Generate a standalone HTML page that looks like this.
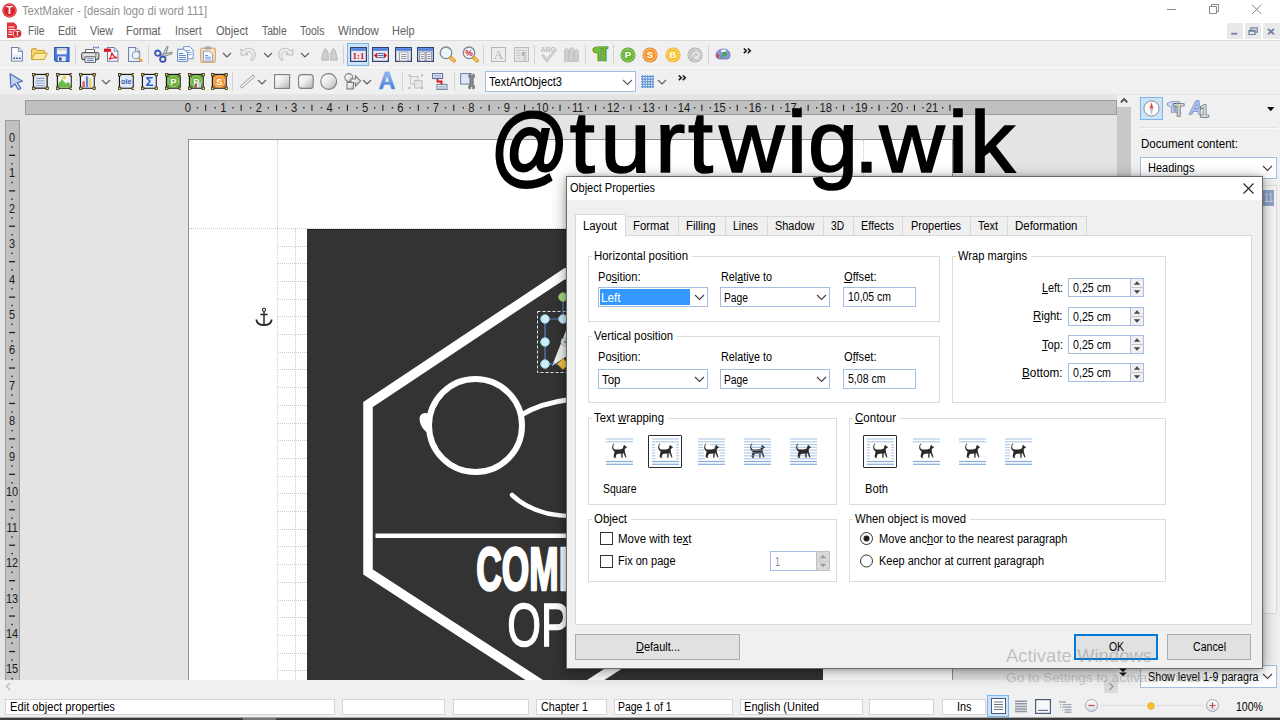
<!DOCTYPE html>
<html lang="en"><head><meta charset="utf-8"><title>TextMaker - Object Properties</title>
<style>
html,body{margin:0;padding:0}
body{width:1280px;height:720px;overflow:hidden;position:relative;background:#f0f0f0;font-family:"Liberation Sans",sans-serif;font-size:12px}
.r{position:absolute;box-sizing:border-box;display:block}
.t{position:absolute;white-space:nowrap;transform-origin:0 50%;display:block}
svg text{font-family:"Liberation Sans",sans-serif}
svg text.sf{font-family:"Liberation Serif",serif}
u{text-decoration:underline;text-underline-offset:1px}
</style></head>
<body>
<div class="r" style="left:0px;top:0px;width:1280px;height:40px;background:#fff;"></div>
<svg class="r" style="left:2px;top:3px" width="15" height="15" viewBox="0 0 15 15"><circle cx="7.5" cy="7.5" r="7.2" fill="#d9232e"/><circle cx="7.5" cy="7.5" r="6" fill="none" stroke="#ef6b6f" stroke-width="1"/><text x="7.500" y="11.400" text-anchor="middle" font-size="10.500" font-weight="bold" fill="#fff">T</text></svg>
<span class="t" style="left:22.0px;top:2.5px;height:16px;line-height:16px;font-size:12px;color:#909090;transform:scaleX(0.936);">TextMaker - [desain logo di word 111]</span>
<svg class="r" style="left:1160px;top:0" width="120" height="20" viewBox="0 0 120 20" fill="none" stroke="#8a8a8a" stroke-width="1"><path d="M7 9.500h9"/><path d="M49.500 6.500h7v7h-7z M51.500 6.500v-2h7v7h-2"/><path d="M92 4.800l9.400 9.200M101.400 4.800l-9.400 9.200"/></svg>
<svg class="r" style="left:5.500px;top:22px" width="17" height="17" viewBox="0 0 17 17"><path d="M1 0.5h7l3 3v12.5h-10z" fill="#e0323c"/><path d="M2.5 5h6M2.5 7.5h6M2.5 10h4M2.5 12.5h4" stroke="#fff" stroke-width="1.2"/><circle cx="11.5" cy="11.5" r="4.3" fill="#d9232e" stroke="#fff" stroke-width=".8"/><text x="11.500" y="13.900" text-anchor="middle" font-size="6.500" font-weight="bold" fill="#fff">T</text></svg>
<span class="t" style="left:27.8px;top:22.5px;height:16px;line-height:16px;font-size:12px;color:#616161;transform:scaleX(0.848);">File</span>
<span class="t" style="left:57.9px;top:22.5px;height:16px;line-height:16px;font-size:12px;color:#616161;transform:scaleX(0.885);">Edit</span>
<span class="t" style="left:90.1px;top:22.5px;height:16px;line-height:16px;font-size:12px;color:#616161;transform:scaleX(0.896);">View</span>
<span class="t" style="left:126.1px;top:22.5px;height:16px;line-height:16px;font-size:12px;color:#616161;transform:scaleX(0.910);">Format</span>
<span class="t" style="left:174.7px;top:22.5px;height:16px;line-height:16px;font-size:12px;color:#616161;transform:scaleX(0.886);">Insert</span>
<span class="t" style="left:215.6px;top:22.5px;height:16px;line-height:16px;font-size:12px;color:#616161;transform:scaleX(0.923);">Object</span>
<span class="t" style="left:262.0px;top:22.5px;height:16px;line-height:16px;font-size:12px;color:#616161;transform:scaleX(0.858);">Table</span>
<span class="t" style="left:300.4px;top:22.5px;height:16px;line-height:16px;font-size:12px;color:#616161;transform:scaleX(0.871);">Tools</span>
<span class="t" style="left:338.3px;top:22.5px;height:16px;line-height:16px;font-size:12px;color:#616161;transform:scaleX(0.958);">Window</span>
<span class="t" style="left:392.2px;top:22.5px;height:16px;line-height:16px;font-size:12px;color:#616161;transform:scaleX(0.912);">Help</span>
<div class="r" style="left:1227px;top:23px;width:16px;height:16px;background:#e9e9e9;"></div>
<div class="r" style="left:1245px;top:23px;width:16px;height:16px;background:#e9e9e9;"></div>
<div class="r" style="left:1262.5px;top:23px;width:17.5px;height:16px;background:#e9e9e9;"></div>
<svg class="r" style="left:1225px;top:22px" width="55" height="18" viewBox="0 0 55 18" fill="none" stroke="#6f819e" stroke-width="1.5"><path d="M6.200 11.700h6" stroke-width="1.800"/><path d="M24 8.300h6v4.200h-6z M26 8v-2.200h6.200v4.400h-2" stroke-width="1.200"/><path d="M24 9h6" stroke-width="1.600"/><path d="M43 6.800l6 5.600M49 6.800l-6 5.600" stroke-width="1.700"/></svg>
<div class="r" style="left:0px;top:40px;width:1280px;height:55px;background:#f0f0f0;"></div>
<div class="r" style="left:0px;top:40px;width:1280px;height:1px;background:#dcdcdc;"></div>
<div class="r" style="left:0px;top:67px;width:1280px;height:1px;background:#fafafa;"></div>
<div class="r" style="left:0px;top:94px;width:1280px;height:1px;background:#e6e6e6;"></div>
<div class="r" style="left:0px;top:95px;width:1131px;height:585px;background:#e4e4e4;"></div>
<div class="r" style="left:25px;top:100px;width:1092px;height:15px;background:#c0c0c0;border:1px solid #9b9b9b;"></div>
<div class="r" style="left:5px;top:120px;width:15px;height:565px;background:#c0c0c0;border:1px solid #9b9b9b;"></div>
<svg class="r" style="left:0;top:100px" width="1131" height="16" viewBox="0 0 1131 16"><text transform="translate(187.9 11.600) scale(.92 1)" x="0" y="0" text-anchor="middle" font-size="12.200" fill="#1c1c1c">0</text><text transform="translate(223.3 11.600) scale(.92 1)" x="0" y="0" text-anchor="middle" font-size="12.200" fill="#1c1c1c">1</text><text transform="translate(258.8 11.600) scale(.92 1)" x="0" y="0" text-anchor="middle" font-size="12.200" fill="#1c1c1c">2</text><text transform="translate(294.2 11.600) scale(.92 1)" x="0" y="0" text-anchor="middle" font-size="12.200" fill="#1c1c1c">3</text><text transform="translate(329.7 11.600) scale(.92 1)" x="0" y="0" text-anchor="middle" font-size="12.200" fill="#1c1c1c">4</text><text transform="translate(365.1 11.600) scale(.92 1)" x="0" y="0" text-anchor="middle" font-size="12.200" fill="#1c1c1c">5</text><text transform="translate(400.5 11.600) scale(.92 1)" x="0" y="0" text-anchor="middle" font-size="12.200" fill="#1c1c1c">6</text><text transform="translate(436.0 11.600) scale(.92 1)" x="0" y="0" text-anchor="middle" font-size="12.200" fill="#1c1c1c">7</text><text transform="translate(471.4 11.600) scale(.92 1)" x="0" y="0" text-anchor="middle" font-size="12.200" fill="#1c1c1c">8</text><text transform="translate(506.9 11.600) scale(.92 1)" x="0" y="0" text-anchor="middle" font-size="12.200" fill="#1c1c1c">9</text><text transform="translate(542.3 11.600) scale(.92 1)" x="0" y="0" text-anchor="middle" font-size="12.200" fill="#1c1c1c">10</text><text transform="translate(577.7 11.600) scale(.92 1)" x="0" y="0" text-anchor="middle" font-size="12.200" fill="#1c1c1c">11</text><text transform="translate(613.2 11.600) scale(.92 1)" x="0" y="0" text-anchor="middle" font-size="12.200" fill="#1c1c1c">12</text><text transform="translate(648.6 11.600) scale(.92 1)" x="0" y="0" text-anchor="middle" font-size="12.200" fill="#1c1c1c">13</text><text transform="translate(684.1 11.600) scale(.92 1)" x="0" y="0" text-anchor="middle" font-size="12.200" fill="#1c1c1c">14</text><text transform="translate(719.5 11.600) scale(.92 1)" x="0" y="0" text-anchor="middle" font-size="12.200" fill="#1c1c1c">15</text><text transform="translate(754.9 11.600) scale(.92 1)" x="0" y="0" text-anchor="middle" font-size="12.200" fill="#1c1c1c">16</text><text transform="translate(790.4 11.600) scale(.92 1)" x="0" y="0" text-anchor="middle" font-size="12.200" fill="#1c1c1c">17</text><text transform="translate(825.8 11.600) scale(.92 1)" x="0" y="0" text-anchor="middle" font-size="12.200" fill="#1c1c1c">18</text><text transform="translate(861.3 11.600) scale(.92 1)" x="0" y="0" text-anchor="middle" font-size="12.200" fill="#1c1c1c">19</text><text transform="translate(896.7 11.600) scale(.92 1)" x="0" y="0" text-anchor="middle" font-size="12.200" fill="#1c1c1c">20</text><text transform="translate(932.1 11.600) scale(.92 1)" x="0" y="0" text-anchor="middle" font-size="12.200" fill="#1c1c1c">21</text><rect x="196.8" y="7.100" width="1.400" height="1.400" fill="#222"/><rect x="205.1" y="4.700" width="1.100" height="6.200" fill="#222"/><rect x="214.5" y="7.100" width="1.400" height="1.400" fill="#222"/><rect x="232.2" y="7.100" width="1.400" height="1.400" fill="#222"/><rect x="240.6" y="4.700" width="1.100" height="6.200" fill="#222"/><rect x="249.9" y="7.100" width="1.400" height="1.400" fill="#222"/><rect x="267.6" y="7.100" width="1.400" height="1.400" fill="#222"/><rect x="276.0" y="4.700" width="1.100" height="6.200" fill="#222"/><rect x="285.4" y="7.100" width="1.400" height="1.400" fill="#222"/><rect x="303.1" y="7.100" width="1.400" height="1.400" fill="#222"/><rect x="311.4" y="4.700" width="1.100" height="6.200" fill="#222"/><rect x="320.8" y="7.100" width="1.400" height="1.400" fill="#222"/><rect x="338.5" y="7.100" width="1.400" height="1.400" fill="#222"/><rect x="346.9" y="4.700" width="1.100" height="6.200" fill="#222"/><rect x="356.2" y="7.100" width="1.400" height="1.400" fill="#222"/><rect x="374.0" y="7.100" width="1.400" height="1.400" fill="#222"/><rect x="382.3" y="4.700" width="1.100" height="6.200" fill="#222"/><rect x="391.7" y="7.100" width="1.400" height="1.400" fill="#222"/><rect x="409.4" y="7.100" width="1.400" height="1.400" fill="#222"/><rect x="417.8" y="4.700" width="1.100" height="6.200" fill="#222"/><rect x="427.1" y="7.100" width="1.400" height="1.400" fill="#222"/><rect x="444.8" y="7.100" width="1.400" height="1.400" fill="#222"/><rect x="453.2" y="4.700" width="1.100" height="6.200" fill="#222"/><rect x="462.6" y="7.100" width="1.400" height="1.400" fill="#222"/><rect x="480.3" y="7.100" width="1.400" height="1.400" fill="#222"/><rect x="488.6" y="4.700" width="1.100" height="6.200" fill="#222"/><rect x="498.0" y="7.100" width="1.400" height="1.400" fill="#222"/><rect x="515.7" y="7.100" width="1.400" height="1.400" fill="#222"/><rect x="524.1" y="4.700" width="1.100" height="6.200" fill="#222"/><rect x="532.4" y="7.100" width="1.400" height="1.400" fill="#222"/><rect x="552.2" y="7.100" width="1.400" height="1.400" fill="#222"/><rect x="559.5" y="4.700" width="1.100" height="6.200" fill="#222"/><rect x="567.9" y="7.100" width="1.400" height="1.400" fill="#222"/><rect x="587.6" y="7.100" width="1.400" height="1.400" fill="#222"/><rect x="595.0" y="4.700" width="1.100" height="6.200" fill="#222"/><rect x="603.3" y="7.100" width="1.400" height="1.400" fill="#222"/><rect x="623.0" y="7.100" width="1.400" height="1.400" fill="#222"/><rect x="630.4" y="4.700" width="1.100" height="6.200" fill="#222"/><rect x="638.8" y="7.100" width="1.400" height="1.400" fill="#222"/><rect x="658.5" y="7.100" width="1.400" height="1.400" fill="#222"/><rect x="665.8" y="4.700" width="1.100" height="6.200" fill="#222"/><rect x="674.2" y="7.100" width="1.400" height="1.400" fill="#222"/><rect x="693.9" y="7.100" width="1.400" height="1.400" fill="#222"/><rect x="701.3" y="4.700" width="1.100" height="6.200" fill="#222"/><rect x="709.6" y="7.100" width="1.400" height="1.400" fill="#222"/><rect x="729.4" y="7.100" width="1.400" height="1.400" fill="#222"/><rect x="736.7" y="4.700" width="1.100" height="6.200" fill="#222"/><rect x="745.1" y="7.100" width="1.400" height="1.400" fill="#222"/><rect x="764.8" y="7.100" width="1.400" height="1.400" fill="#222"/><rect x="772.2" y="4.700" width="1.100" height="6.200" fill="#222"/><rect x="780.5" y="7.100" width="1.400" height="1.400" fill="#222"/><rect x="800.2" y="7.100" width="1.400" height="1.400" fill="#222"/><rect x="807.6" y="4.700" width="1.100" height="6.200" fill="#222"/><rect x="816.0" y="7.100" width="1.400" height="1.400" fill="#222"/><rect x="835.7" y="7.100" width="1.400" height="1.400" fill="#222"/><rect x="843.0" y="4.700" width="1.100" height="6.200" fill="#222"/><rect x="851.4" y="7.100" width="1.400" height="1.400" fill="#222"/><rect x="871.1" y="7.100" width="1.400" height="1.400" fill="#222"/><rect x="878.5" y="4.700" width="1.100" height="6.200" fill="#222"/><rect x="886.8" y="7.100" width="1.400" height="1.400" fill="#222"/><rect x="906.6" y="7.100" width="1.400" height="1.400" fill="#222"/><rect x="913.9" y="4.700" width="1.100" height="6.200" fill="#222"/><rect x="922.3" y="7.100" width="1.400" height="1.400" fill="#222"/><rect x="942.0" y="7.100" width="1.400" height="1.400" fill="#222"/><rect x="949.4" y="4.700" width="1.100" height="6.200" fill="#222"/></svg>
<svg class="r" style="left:5px;top:120px" width="17" height="560" viewBox="0 0 17 560"><text transform="translate(7.100 21.8) scale(.9 1)" x="0" y="0" text-anchor="middle" font-size="12.200" fill="#1c1c1c">0</text><rect x="6.400" y="26.4" width="1.400" height="1.400" fill="#222"/><rect x="4.100" y="34.7" width="6" height="1.300" fill="#222"/><rect x="6.400" y="43.1" width="1.400" height="1.400" fill="#222"/><text transform="translate(7.100 57.2) scale(.9 1)" x="0" y="0" text-anchor="middle" font-size="12.200" fill="#1c1c1c">1</text><rect x="6.400" y="61.8" width="1.400" height="1.400" fill="#222"/><rect x="4.100" y="70.2" width="6" height="1.300" fill="#222"/><rect x="6.400" y="78.5" width="1.400" height="1.400" fill="#222"/><text transform="translate(7.100 92.7) scale(.9 1)" x="0" y="0" text-anchor="middle" font-size="12.200" fill="#1c1c1c">2</text><rect x="6.400" y="97.2" width="1.400" height="1.400" fill="#222"/><rect x="4.100" y="105.6" width="6" height="1.300" fill="#222"/><rect x="6.400" y="114.0" width="1.400" height="1.400" fill="#222"/><text transform="translate(7.100 128.1) scale(.9 1)" x="0" y="0" text-anchor="middle" font-size="12.200" fill="#1c1c1c">3</text><rect x="6.400" y="132.7" width="1.400" height="1.400" fill="#222"/><rect x="4.100" y="141.0" width="6" height="1.300" fill="#222"/><rect x="6.400" y="149.4" width="1.400" height="1.400" fill="#222"/><text transform="translate(7.100 163.6) scale(.9 1)" x="0" y="0" text-anchor="middle" font-size="12.200" fill="#1c1c1c">4</text><rect x="6.400" y="168.1" width="1.400" height="1.400" fill="#222"/><rect x="4.100" y="176.5" width="6" height="1.300" fill="#222"/><rect x="6.400" y="184.8" width="1.400" height="1.400" fill="#222"/><text transform="translate(7.100 199.0) scale(.9 1)" x="0" y="0" text-anchor="middle" font-size="12.200" fill="#1c1c1c">5</text><rect x="6.400" y="203.6" width="1.400" height="1.400" fill="#222"/><rect x="4.100" y="211.9" width="6" height="1.300" fill="#222"/><rect x="6.400" y="220.3" width="1.400" height="1.400" fill="#222"/><text transform="translate(7.100 234.4) scale(.9 1)" x="0" y="0" text-anchor="middle" font-size="12.200" fill="#1c1c1c">6</text><rect x="6.400" y="239.0" width="1.400" height="1.400" fill="#222"/><rect x="4.100" y="247.4" width="6" height="1.300" fill="#222"/><rect x="6.400" y="255.7" width="1.400" height="1.400" fill="#222"/><text transform="translate(7.100 269.9) scale(.9 1)" x="0" y="0" text-anchor="middle" font-size="12.200" fill="#1c1c1c">7</text><rect x="6.400" y="274.4" width="1.400" height="1.400" fill="#222"/><rect x="4.100" y="282.8" width="6" height="1.300" fill="#222"/><rect x="6.400" y="291.2" width="1.400" height="1.400" fill="#222"/><text transform="translate(7.100 305.3) scale(.9 1)" x="0" y="0" text-anchor="middle" font-size="12.200" fill="#1c1c1c">8</text><rect x="6.400" y="309.9" width="1.400" height="1.400" fill="#222"/><rect x="4.100" y="318.2" width="6" height="1.300" fill="#222"/><rect x="6.400" y="326.6" width="1.400" height="1.400" fill="#222"/><text transform="translate(7.100 340.8) scale(.9 1)" x="0" y="0" text-anchor="middle" font-size="12.200" fill="#1c1c1c">9</text><rect x="6.400" y="345.3" width="1.400" height="1.400" fill="#222"/><rect x="4.100" y="353.7" width="6" height="1.300" fill="#222"/><rect x="6.400" y="362.0" width="1.400" height="1.400" fill="#222"/><text transform="translate(7.100 376.2) scale(.9 1)" x="0" y="0" text-anchor="middle" font-size="12.200" fill="#1c1c1c">10</text><rect x="6.400" y="380.8" width="1.400" height="1.400" fill="#222"/><rect x="4.100" y="389.1" width="6" height="1.300" fill="#222"/><rect x="6.400" y="397.5" width="1.400" height="1.400" fill="#222"/><text transform="translate(7.100 411.6) scale(.9 1)" x="0" y="0" text-anchor="middle" font-size="12.200" fill="#1c1c1c">11</text><rect x="6.400" y="416.2" width="1.400" height="1.400" fill="#222"/><rect x="4.100" y="424.6" width="6" height="1.300" fill="#222"/><rect x="6.400" y="432.9" width="1.400" height="1.400" fill="#222"/><text transform="translate(7.100 447.1) scale(.9 1)" x="0" y="0" text-anchor="middle" font-size="12.200" fill="#1c1c1c">12</text><rect x="6.400" y="451.6" width="1.400" height="1.400" fill="#222"/><rect x="4.100" y="460.0" width="6" height="1.300" fill="#222"/><rect x="6.400" y="468.4" width="1.400" height="1.400" fill="#222"/><text transform="translate(7.100 482.5) scale(.9 1)" x="0" y="0" text-anchor="middle" font-size="12.200" fill="#1c1c1c">13</text><rect x="6.400" y="487.1" width="1.400" height="1.400" fill="#222"/><rect x="4.100" y="495.4" width="6" height="1.300" fill="#222"/><rect x="6.400" y="503.8" width="1.400" height="1.400" fill="#222"/><text transform="translate(7.100 518.0) scale(.9 1)" x="0" y="0" text-anchor="middle" font-size="12.200" fill="#1c1c1c">14</text><rect x="6.400" y="522.5" width="1.400" height="1.400" fill="#222"/><rect x="4.100" y="530.9" width="6" height="1.300" fill="#222"/><rect x="6.400" y="539.2" width="1.400" height="1.400" fill="#222"/><text transform="translate(7.100 553.4) scale(.9 1)" x="0" y="0" text-anchor="middle" font-size="12.200" fill="#1c1c1c">15</text><rect x="6.400" y="558.0" width="1.400" height="1.400" fill="#222"/><rect x="4.100" y="566.3" width="6" height="1.300" fill="#222"/><rect x="6.400" y="574.7" width="1.400" height="1.400" fill="#222"/></svg>
<div class="r" style="left:188px;top:139px;width:765px;height:541px;background:#fff;border-left:1px solid #8e8e8e;border-top:1px solid #8e8e8e;border-right:1px solid #8e8e8e;"></div>
<div class="r" style="left:277px;top:140px;width:0;height:540px;border-left:1px dotted #c9c9c9"></div>
<div class="r" style="left:190px;top:228px;width:632px;height:0;border-top:1px dotted #c9c9c9"></div>
<div class="r" style="left:295px;top:228px;width:0;height:452px;border-left:1px dotted #c9c9c9"></div>
<div class="r" style="left:278px;top:245.5px;width:29px;height:0;border-top:1px dotted #c9c9c9"></div>
<div class="r" style="left:278px;top:263.2px;width:29px;height:0;border-top:1px dotted #c9c9c9"></div>
<div class="r" style="left:278px;top:280.9px;width:29px;height:0;border-top:1px dotted #c9c9c9"></div>
<div class="r" style="left:278px;top:298.6px;width:29px;height:0;border-top:1px dotted #c9c9c9"></div>
<div class="r" style="left:278px;top:316.3px;width:29px;height:0;border-top:1px dotted #c9c9c9"></div>
<div class="r" style="left:278px;top:334.0px;width:29px;height:0;border-top:1px dotted #c9c9c9"></div>
<div class="r" style="left:278px;top:351.7px;width:29px;height:0;border-top:1px dotted #c9c9c9"></div>
<div class="r" style="left:278px;top:369.4px;width:29px;height:0;border-top:1px dotted #c9c9c9"></div>
<div class="r" style="left:278px;top:387.1px;width:29px;height:0;border-top:1px dotted #c9c9c9"></div>
<div class="r" style="left:278px;top:404.8px;width:29px;height:0;border-top:1px dotted #c9c9c9"></div>
<div class="r" style="left:278px;top:422.5px;width:29px;height:0;border-top:1px dotted #c9c9c9"></div>
<div class="r" style="left:278px;top:440.2px;width:29px;height:0;border-top:1px dotted #c9c9c9"></div>
<div class="r" style="left:278px;top:457.9px;width:29px;height:0;border-top:1px dotted #c9c9c9"></div>
<div class="r" style="left:278px;top:475.6px;width:29px;height:0;border-top:1px dotted #c9c9c9"></div>
<div class="r" style="left:278px;top:493.3px;width:29px;height:0;border-top:1px dotted #c9c9c9"></div>
<div class="r" style="left:278px;top:511.0px;width:29px;height:0;border-top:1px dotted #c9c9c9"></div>
<div class="r" style="left:278px;top:528.7px;width:29px;height:0;border-top:1px dotted #c9c9c9"></div>
<div class="r" style="left:278px;top:546.4px;width:29px;height:0;border-top:1px dotted #c9c9c9"></div>
<div class="r" style="left:278px;top:564.1px;width:29px;height:0;border-top:1px dotted #c9c9c9"></div>
<div class="r" style="left:278px;top:581.8px;width:29px;height:0;border-top:1px dotted #c9c9c9"></div>
<div class="r" style="left:278px;top:599.5px;width:29px;height:0;border-top:1px dotted #c9c9c9"></div>
<div class="r" style="left:278px;top:617.2px;width:29px;height:0;border-top:1px dotted #c9c9c9"></div>
<div class="r" style="left:278px;top:634.9px;width:29px;height:0;border-top:1px dotted #c9c9c9"></div>
<div class="r" style="left:278px;top:652.6px;width:29px;height:0;border-top:1px dotted #c9c9c9"></div>
<div class="r" style="left:278px;top:670.3px;width:29px;height:0;border-top:1px dotted #c9c9c9"></div>
<div class="r" style="left:863px;top:140px;width:0;height:40px;border-left:1px dotted #c9c9c9"></div>
<svg class="r" style="left:254px;top:306px" width="20" height="22" viewBox="0 0 20 22" fill="none" stroke="#2b2b2b" stroke-width="1.5"><circle cx="10" cy="3.8" r="1.6" stroke-width="1.1"/><path d="M10 5.5v13.5M6.3 8.6h7.4" /><path d="M2.2 13.5c0.6 3.6 3.6 5.6 7.8 5.6s7.2-2 7.8-5.6" stroke-width="1.7"/></svg>
<svg class="r" style="left:306.500px;top:229px" width="516" height="451" viewBox="307 229 516 451"><rect x="307" y="229" width="516" height="451" fill="#333"/><rect x="307" y="229" width="516" height="1" fill="#222"/><path d="M565 273.5L368 404.5V572L565 700L762 572V404.5Z" fill="none" stroke="#fff" stroke-width="9.5" stroke-linejoin="miter"/><circle cx="475.5" cy="425.5" r="46.5" fill="none" stroke="#fff" stroke-width="6"/><path d="M429 414c-6-3-11 1-9 8s7 12 10 10z" fill="#fff"/><path d="M519.5 416Q540 403 570 399.500" fill="none" stroke="#fff" stroke-width="5"/><path d="M512 495C528 510 548 516 572 516" fill="none" stroke="#fff" stroke-width="4.5" stroke-linecap="round"/><rect x="375.5" y="533.5" width="250" height="4.5" fill="#fff"/><text x="0" y="0" transform="translate(476.300 590.400) scale(0.57 1)" font-size="62" font-weight="bold" fill="#fff" stroke="#fff" stroke-width="2.500" stroke-linejoin="round">COMPANY</text><text x="0" y="0" transform="translate(507.200 645.600) scale(0.70 1)" font-size="62" fill="#fff" stroke="#fff" stroke-width="1.500">OPTIC</text><g><path d="M567 328L552 366L567 356Z" fill="#f2f2f2"/><rect x="537.5" y="311.5" width="40" height="61" fill="none" stroke="#dfe6f2" stroke-width="1" stroke-dasharray="3 2"/><path d="M545 319H567M545 319V364H567M563 297V319" stroke="#5b7fc4" stroke-width="1.2" fill="none"/><circle cx="545" cy="319" r="4.3" fill="#cdeef6" stroke="#8fd0e6" stroke-width="1"/><circle cx="563" cy="319" r="4.3" fill="#cdeef6" stroke="#8fd0e6" stroke-width="1"/><circle cx="545" cy="342" r="4.3" fill="#cdeef6" stroke="#8fd0e6" stroke-width="1"/><circle cx="545" cy="364" r="4.3" fill="#cdeef6" stroke="#8fd0e6" stroke-width="1"/><circle cx="563" cy="297" r="4.3" fill="#a6dc8c" stroke="#86c46e" stroke-width="1"/><path d="M563 358.5l5.5 5.5l-5.5 5.5l-5.5-5.5z" fill="#f5c84a" stroke="#e0a820" stroke-width=".8"/><circle cx="565" cy="342" r="4" fill="#e8e8e8" stroke="#bdbdbd"/><circle cx="565" cy="342" r="1.2" fill="#4caf50"/></g></svg>
<div class="r" style="left:1117px;top:95px;width:14px;height:585px;background:#f0f0f0;"></div>
<div class="r" style="left:1117px;top:107px;width:14px;height:560px;background:#c9c9c9;"></div>
<svg class="r" style="left:1117px;top:95px" width="14" height="12" viewBox="0 0 14 12"><path d="M3.900 7.300L7.100 4.100L10.300 7.300" fill="none" stroke="#4a4a4a" stroke-width="1.800"/></svg>
<div class="r" style="left:0px;top:680px;width:1131px;height:13px;background:#f0f0f0;"></div>
<svg class="r" style="left:2px;top:680px" width="12" height="13" viewBox="0 0 12 13"><path d="M8 3L4.5 6.5L8 10" fill="none" stroke="#bdbdbd" stroke-width="1.4"/></svg>
<div class="r" style="left:1104px;top:680px;width:14px;height:13px;background:#dadada;"></div>
<svg class="r" style="left:1104px;top:680px" width="14" height="13" viewBox="0 0 14 13"><path d="M5.5 3L9 6.5L5.5 10" fill="none" stroke="#9a9a9a" stroke-width="1.4"/></svg>
<div class="r" style="left:1131px;top:95px;width:149px;height:600px;background:#f0f0f0;"></div>
<div class="r" style="left:1140px;top:97px;width:23px;height:23px;background:#cce4f7;border:1px solid #7eb4ea;"></div>
<svg class="r" style="left:1143px;top:100px" width="17" height="17" viewBox="0 0 17 17"><circle cx="8.5" cy="8.5" r="7.6" fill="#fff" stroke="#8a8a8a" stroke-width="1"/><path d="M8.5 2.2L10.4 8.5H6.6Z" fill="#e8403c"/><path d="M8.5 14.8L10.4 8.5H6.6Z" fill="#b9bec6"/></svg>
<svg class="r" style="left:1164px;top:97px" width="24" height="23" viewBox="0 0 24 23"><text transform="translate(9.300 13.800) scale(1.8 1)" x="0" y="0" text-anchor="middle" font-size="13" font-weight="bold" fill="#c9d6f2" stroke="#5b74b4" stroke-width=".8" paint-order="stroke">¶</text><text transform="translate(14.600 19) scale(1.1 1)" x="0" y="0" text-anchor="middle" font-size="16" font-weight="bold" fill="#cfcfcf" stroke="#3a3a3a" stroke-width="1" paint-order="stroke">T</text></svg>
<svg class="r" style="left:1187px;top:96px" width="24" height="24" viewBox="0 0 24 24"><text transform="translate(2.500 17.500) scale(.93 1)" x="0" y="0" font-size="18.800" font-weight="bold" font-style="italic" fill="#a9bdea" stroke="#4f66a6" stroke-width=".8" paint-order="stroke">A</text><text x="12.600" y="21" font-size="17" font-weight="bold" fill="#d4d4d4" stroke="#3a3a3a" stroke-width="1" paint-order="stroke">1</text></svg>
<svg class="r" style="left:1267px;top:106.500px" width="8" height="5" viewBox="0 0 8 5"><path d="M0 0h7.500L3.750 4.200Z" fill="#111"/></svg>
<div class="r" style="left:1140px;top:127px;width:137px;height:1px;background:#e2e2e2;"></div>
<div class="r" style="left:1140px;top:128px;width:137px;height:1px;background:#fbfbfb;"></div>
<span class="t" style="left:1141.0px;top:136.0px;height:16px;line-height:16px;font-size:12px;color:#000;transform:scaleX(0.963);">Document content:</span>
<div class="r" style="left:1140px;top:157px;width:137px;height:22px;background:#fff;border:1px solid #a3bde3;"></div>
<span class="t" style="left:1147.5px;top:160.0px;height:16px;line-height:16px;font-size:12px;color:#000;transform:scaleX(0.917);">Headings</span>
<svg class="r" style="left:1262.0px;top:164.8px" width="11" height="7.5" viewBox="-1 -1 11 7.5"><path d="M0 0L4.5 4.5L9 0" fill="none" stroke="#444" stroke-width="1.2"/></svg>
<div class="r" style="left:1140px;top:185px;width:137px;height:429px;background:#f6f6f6;border:1px solid #dcdcdc;"></div>
<div class="r" style="left:1262px;top:190px;width:12px;height:16px;background:#8fa5cb;"></div>
<span class="t" style="left:1264.0px;top:190.0px;height:16px;line-height:16px;font-size:12px;color:#cfd9ee;transform:scaleX(0.723);">11</span>
<div class="r" style="left:1140px;top:665px;width:137px;height:23px;background:#fff;border:1px solid #a3bde3;"></div>
<span class="t" style="left:1147.5px;top:669.0px;height:16px;line-height:16px;font-size:12px;color:#000;transform:scaleX(0.895);">Show level 1-9 paragra</span>
<svg class="r" style="left:1262.0px;top:673.2px" width="11" height="7.5" viewBox="-1 -1 11 7.5"><path d="M0 0L4.5 4.5L9 0" fill="none" stroke="#444" stroke-width="1.2"/></svg>
<div class="r" style="left:0px;top:693px;width:1280px;height:24px;background:#f0f0f0;"></div>
<div class="r" style="left:5px;top:699px;width:330px;height:16px;background:#fff;border:1px solid #d4d4d4;"></div>
<div class="r" style="left:342px;top:699px;width:103px;height:16px;background:#fff;border:1px solid #d4d4d4;"></div>
<div class="r" style="left:453px;top:699px;width:76px;height:16px;background:#fff;border:1px solid #d4d4d4;"></div>
<div class="r" style="left:536px;top:699px;width:71px;height:16px;background:#fff;border:1px solid #d4d4d4;"></div>
<div class="r" style="left:614px;top:699px;width:119px;height:16px;background:#fff;border:1px solid #d4d4d4;"></div>
<div class="r" style="left:740px;top:699px;width:123px;height:16px;background:#fff;border:1px solid #d4d4d4;"></div>
<div class="r" style="left:869px;top:699px;width:65px;height:16px;background:#fff;border:1px solid #d4d4d4;"></div>
<div class="r" style="left:942px;top:699px;width:44px;height:16px;background:#fff;border:1px solid #d4d4d4;"></div>
<span class="t" style="left:9.5px;top:698.5px;height:16px;line-height:16px;font-size:12px;color:#000;transform:scaleX(0.931);">Edit object properties</span>
<span class="t" style="left:540.5px;top:698.5px;height:16px;line-height:16px;font-size:12px;color:#000;transform:scaleX(0.892);">Chapter 1</span>
<span class="t" style="left:618.0px;top:698.5px;height:16px;line-height:16px;font-size:12px;color:#000;transform:scaleX(0.872);">Page 1 of 1</span>
<span class="t" style="left:744.0px;top:698.5px;height:16px;line-height:16px;font-size:12px;color:#000;transform:scaleX(0.922);">English (United</span>
<span class="t" style="left:956.5px;top:698.5px;height:16px;line-height:16px;font-size:12px;color:#000;transform:scaleX(0.906);">Ins</span>
<div class="r" style="left:987px;top:695px;width:22px;height:22px;background:#cce4f7;border:1px solid #7eb4ea;"></div>
<svg class="r" style="left:991px;top:698px" width="15" height="16" viewBox="0 0 15 16"><rect x=".5" y=".5" width="14" height="15" fill="#fff" stroke="#4a5a78"/><path d="M3 4h9M3 6.5h9M3 9h9M3 11.500h9" stroke="#6b7280" stroke-width="1.1"/></svg>
<svg class="r" style="left:1014.500px;top:700px" width="12" height="13" viewBox="0 0 12 13"><path d="M0 1.200h12M0 3.800h12M0 6.400h12M0 9h12M0 11.600h12" stroke="#8c93a4" stroke-width="1.500"/></svg>
<svg class="r" style="left:1035px;top:699px" width="16" height="15" viewBox="0 0 16 15"><rect x=".6" y=".6" width="14.800" height="13.800" fill="#f7f8fa" stroke="#4a5a7a" stroke-width="1.200"/><path d="M3 11.400h10" stroke="#5a6a8a" stroke-width="1.100"/></svg>
<svg class="r" style="left:1059px;top:701px" width="13" height="12" viewBox="0 0 13 12"><path d="M0 1h7M3.500 3.600h9M3.500 6.200h9M5.500 8.800h7M5.500 11.300h7" stroke="#a4a9b4" stroke-width="1.400"/><path d="M1 3.600h1.200M1 6.200h1.200M3 8.800h1.200" stroke="#a4a9b4" stroke-width="1.200"/></svg>
<svg class="r" style="left:0;top:0" width="0" height="0"><defs><linearGradient id="gzb" x1="0" y1="0" x2="0" y2="1"><stop offset="0" stop-color="#ffffff"/><stop offset="1" stop-color="#d4dbe8"/></linearGradient></defs></svg>
<div class="r" style="left:1101px;top:705px;width:102px;height:1px;background:#dedede;"></div>
<svg class="r" style="left:1084.5px;top:698.5px" width="13" height="13" viewBox="0 0 13 13"><circle cx="6.500" cy="6.500" r="6" fill="url(#gzb)" stroke="#a0a6b4" stroke-width="1"/><path d="M3.500 6.500h6" stroke="#c8463f" stroke-width="1.200"/></svg>
<svg class="r" style="left:1206.0px;top:698.5px" width="13" height="13" viewBox="0 0 13 13"><circle cx="6.500" cy="6.500" r="6" fill="url(#gzb)" stroke="#a0a6b4" stroke-width="1"/><path d="M3.500 6.500h6M6.500 3.500v6" stroke="#c8463f" stroke-width="1.200"/></svg>
<svg class="r" style="left:1147px;top:701.500px" width="8" height="8" viewBox="0 0 8 8"><circle cx="4" cy="4" r="3.300" fill="#f6c12d" stroke="#e2a91c" stroke-width=".7"/></svg>
<span class="t" style="left:1235.5px;top:698.5px;height:16px;line-height:16px;font-size:12px;color:#000;transform:scaleX(0.880);">100%</span>
<div class="r" style="left:0px;top:717px;width:1280px;height:1px;background:#a8a8a8;"></div>
<div class="r" style="left:0px;top:718px;width:1280px;height:2px;background:#3c3c3c;"></div>
<div class="r" style="left:243px;top:718px;width:33px;height:2px;background:#777;"></div>
<svg class="r" style="left:11.2px;top:47.2px" width="12" height="14.6" viewBox="0 0 13 16" preserveAspectRatio="none"><path d="M.6 .6h7.400l4.400 4.400v10.400H.6z" fill="#fdfdff" stroke="#6d80a8" stroke-width="1.100"/><path d="M8 .6v4.400h4.400" fill="#dfe6f3" stroke="#6d80a8" stroke-width=".9"/><path d="M1.200 8h10.600v6.800H1.200z" fill="#dce5f5" opacity=".6"/><path d="M2.600 12.300h1.800M5.600 12.300h1.800M8.600 12.300h1.800" stroke="#3c4f86" stroke-width="1.700"/></svg>
<svg class="r" style="left:31px;top:48.4px" width="17" height="12.3" viewBox="0 0 18 13" preserveAspectRatio="none"><path d="M.6 11.800V1.800q0-1 1-1h4l1.400 1.800h6.600q1 0 1 1v2" fill="#f5d877" stroke="#c79a1e" stroke-width="1"/><path d="M.8 12.200L4 5.500h13.200L13.800 12.200z" fill="#fbe9a4" stroke="#c79a1e" stroke-width="1"/></svg>
<svg class="r" style="left:54px;top:47px" width="15.6" height="15" viewBox="0 0 16 16" preserveAspectRatio="none"><path d="M.6 .6h14.800v14.800H2.200L.6 13.800z" fill="#4b7be0" stroke="#2f55b0" stroke-width="1.100"/><rect x="3" y="1.200" width="10" height="6.600" fill="#f4f4f6"/><rect x="3" y="1.200" width="10" height="2.400" fill="#c8ccd6"/><rect x="4" y="10" width="8" height="5.200" fill="#e9ecf4"/><rect x="5.200" y="11" width="2.600" height="3.600" fill="#3a4f86"/></svg>
<div class="r" style="left:75px;top:45px;width:1px;height:19px;background:#d2d2d2;"></div>
<svg class="r" style="left:81px;top:46px" width="19" height="17" viewBox="0 0 19 17"><path d="M12 1.500h1.400M14.300 1.500h1.400M16.600 1.500h1.400" stroke="#3f5fae" stroke-width="1.300"/><path d="M4.500 7V3.500h9V7" fill="#fff" stroke="#6e6e6e" stroke-width="1"/><rect x=".6" y="6.600" width="17.300" height="7" rx="2" fill="#c9c9c9" stroke="#5c5c5c" stroke-width="1.100"/><rect x="1.600" y="7.600" width="15.300" height="2" fill="#e9e9e9"/><circle cx="14.800" cy="8.600" r="1" fill="#3fae49"/><path d="M4 10.800h10.500v5.600H4z" fill="#fff" stroke="#5c5c5c" stroke-width="1"/><path d="M5.800 12.800h7M5.800 14.600h7" stroke="#5a78c0" stroke-width="1"/></svg>
<svg class="r" style="left:104px;top:47px" width="14.5" height="14.8" viewBox="0 0 15 16" preserveAspectRatio="none"><path d="M3.600 .6h6.800l4 4v10.800H3.600z" fill="#fdfdff" stroke="#6d80a8" stroke-width="1.100"/><path d="M10.400 .6v4h4" fill="#dfe6f3" stroke="#6d80a8" stroke-width=".9"/><rect x="0" y="1.800" width="7.400" height="3.400" fill="#e0131f"/><path d="M5.200 13.200c2-2.200 3-5 2.800-7.200c1 3.200 3 5.200 5.600 5.800c-3-.2-6 .2-8.400 1.400z" fill="none" stroke="#e2202c" stroke-width="1.300"/></svg>
<svg class="r" style="left:128px;top:47px" width="15" height="15" viewBox="0 0 16 16" preserveAspectRatio="none"><path d="M.6 .6h7.400l4.400 4.400v10.400H.6z" fill="#eef1f8" stroke="#6d80a8" stroke-width="1.100"/><path d="M8 .6v4.400h4.400" fill="#dfe6f3" stroke="#6d80a8" stroke-width=".9"/><circle cx="8.600" cy="8.800" r="4" fill="#e9f3fb" stroke="#8e9bb0" stroke-width="1.200"/><path d="M11.600 11.800l3.200 3" stroke="#e9a33a" stroke-width="2.200" stroke-linecap="round"/></svg>
<div class="r" style="left:148px;top:45px;width:1px;height:19px;background:#d2d2d2;"></div>
<svg class="r" style="left:154px;top:45px" width="19" height="18" viewBox="0 0 19 18"><path d="M8 11L13.200 1.200l1 .2L11 12z" fill="#d9d9d9" stroke="#777" stroke-width=".8"/><path d="M6.500 9.500L18 7.200l.2 1.600L8 12z" fill="#cfcfcf" stroke="#777" stroke-width=".8"/><circle cx="3.800" cy="8.200" r="2.700" fill="none" stroke="#3a55b4" stroke-width="1.800"/><circle cx="8.800" cy="14.200" r="2.700" fill="none" stroke="#3a55b4" stroke-width="1.800"/></svg>
<svg class="r" style="left:177px;top:46px" width="17" height="16" viewBox="0 0 17 16"><path d="M6.600 .6h6l3.600 3.600v8.600H6.600z" fill="#f4f8ff" stroke="#7b93c4" stroke-width="1"/><path d="M8 4.500h5M8 6.500h6.500M8 8.500h6.500" stroke="#7fa3dc" stroke-width=".9"/><path d="M.6 3.200h6.400l3.600 3.600v8.600H.6z" fill="#f4f8ff" stroke="#6d86bd" stroke-width="1"/><path d="M2 7.500h4M2 9.500h7M2 11.500h7M2 13.500h7" stroke="#5e8ad4" stroke-width="1"/></svg>
<svg class="r" style="left:200px;top:46px" width="16" height="17" viewBox="0 0 16 17"><rect x=".7" y="2.200" width="14.600" height="14.200" rx="1.600" fill="#fbe0c0" stroke="#e0a66a" stroke-width="1.200"/><path d="M5 2.800q0-2.200 3-2.200t3 2.200z" fill="#c9c9c9" stroke="#8a8a8a" stroke-width=".8"/><path d="M3.400 5.200h6.200l3 3v7H3.400z" fill="#fafcff" stroke="#7b93c4" stroke-width=".9"/><path d="M5 9.500h3M5 11.300h6M5 13.100h6" stroke="#5e8ad4" stroke-width=".9"/></svg>
<svg class="r" style="left:222.0px;top:51.5px" width="10" height="7.0" viewBox="-1 -1 10 7.0"><path d="M0 0L4.0 4.0L8 0" fill="none" stroke="#5e5e5e" stroke-width="1.2"/></svg>
<svg class="r" style="left:240px;top:47px" width="17" height="15" viewBox="0 0 17 15"><path d="M.8 2.200l2.600 1.600c2-2.600 6-3.400 9.400-1.400c3.600 2.400 3 7.600-.4 11.200l-1.600-.8c2-2.800 2.200-5.800-.2-7.400c-1.800-1-3.600-.6-4.800.6l2.400 1.600l-7 .6z" fill="#ececec" stroke="#b4b4b4" stroke-width=".9" stroke-linejoin="round"/></svg>
<svg class="r" style="left:263.0px;top:51.5px" width="10" height="7.0" viewBox="-1 -1 10 7.0"><path d="M0 0L4.0 4.0L8 0" fill="none" stroke="#5e5e5e" stroke-width="1.2"/></svg>
<svg class="r" style="left:277px;top:47px" width="17" height="15" viewBox="0 0 17 15"><g transform="translate(17 0) scale(-1 1)"><path d="M.8 2.200l2.600 1.600c2-2.600 6-3.400 9.400-1.400c3.600 2.400 3 7.600-.4 11.200l-1.600-.8c2-2.800 2.200-5.800-.2-7.400c-1.800-1-3.600-.6-4.800.6l2.400 1.600l-7 .6z" fill="#ececec" stroke="#b4b4b4" stroke-width=".9" stroke-linejoin="round"/></g></svg>
<svg class="r" style="left:300.0px;top:51.5px" width="10" height="7.0" viewBox="-1 -1 10 7.0"><path d="M0 0L4.0 4.0L8 0" fill="none" stroke="#5e5e5e" stroke-width="1.2"/></svg>
<svg class="r" style="left:321px;top:48px" width="17" height="13" viewBox="0 0 17 13"><path d="M2.800 2.200h3.200l.6 1.600l1 6.800v1.600H.8V10z M11 2.200h3.200L16.200 10v2.200H9.400v-1.600l1-6.800z" fill="#cdcdcd" stroke="#b5b5b5" stroke-width=".8"/><rect x="3.200" y=".4" width="2.400" height="2" fill="#c4c4c4"/><rect x="11.400" y=".4" width="2.400" height="2" fill="#c4c4c4"/><rect x="7" y="4.500" width="3" height="3.500" fill="#d6d6d6"/></svg>
<div class="r" style="left:343px;top:45px;width:1px;height:19px;background:#d2d2d2;"></div>
<div class="r" style="left:347px;top:43px;width:22px;height:23px;background:#cce4f7;border:1px solid #7eb4ea;"></div>
<svg class="r" style="left:349.5px;top:47px" width="17" height="15" viewBox="0 0 17 15"><rect x=".6" y=".6" width="15.800" height="13.800" fill="#e9ebf0" stroke="#2f416e" stroke-width="1.200"/><rect x="1.200" y="1.200" width="14.600" height="2.600" fill="#4f7fe0"/><text x="8.500" y="12" text-anchor="middle" font-size="9" font-weight="bold" fill="#d0101c" class="sf">1:1</text></svg>
<svg class="r" style="left:372px;top:47px" width="17" height="15" viewBox="0 0 17 15"><rect x=".6" y=".6" width="15.800" height="13.800" fill="#e9ebf0" stroke="#2f416e" stroke-width="1.200"/><rect x="1.200" y="1.200" width="14.600" height="2.600" fill="#4f7fe0"/><path d="M5.500 6.500h6M5.500 8.500h6M5.500 10.500h6" stroke="#4f6fc0" stroke-width="1"/><path d="M1.800 8.500l3.400-3v6zM15.200 8.500l-3.400-3v6z" fill="#d8141f"/></svg>
<svg class="r" style="left:394.5px;top:47px" width="17" height="15" viewBox="0 0 17 15"><rect x=".6" y=".6" width="15.800" height="13.800" fill="#e9ebf0" stroke="#2f416e" stroke-width="1.200"/><rect x="1.200" y="1.200" width="14.600" height="2.600" fill="#4f7fe0"/><rect x="4.500" y="5" width="8.500" height="9" fill="#f4f4f6" stroke="#8a8f9c" stroke-width=".8"/><path d="M6 7.500h5.500M6 9.500h5.500M6 11.500h5.500" stroke="#8a8f9c" stroke-width=".9"/></svg>
<svg class="r" style="left:417px;top:47px" width="17" height="15" viewBox="0 0 17 15"><rect x=".6" y=".6" width="15.800" height="13.800" fill="#e9ebf0" stroke="#2f416e" stroke-width="1.200"/><rect x="1.200" y="1.200" width="14.600" height="2.600" fill="#4f7fe0"/><rect x="2.500" y="5" width="5.500" height="9" fill="#f4f4f6" stroke="#7c8292" stroke-width=".8"/><rect x="9.200" y="5" width="5.500" height="9" fill="#f4f4f6" stroke="#7c8292" stroke-width=".8"/><path d="M3.800 7.500h3M3.800 9.500h3M3.800 11.500h3M10.500 7.500h3M10.500 9.500h3M10.500 11.500h3" stroke="#7c8292" stroke-width=".9"/></svg>
<svg class="r" style="left:439px;top:46px" width="18" height="17" viewBox="0 0 18 17"><circle cx="7" cy="6.800" r="5.800" fill="#eaf4fb" stroke="#7f8790" stroke-width="1.300"/><path d="M3.500 5.500a4 4 0 0 1 4-2.500" stroke="#fff" stroke-width="1.200" fill="none"/><path d="M12 11.800l3 2.800" stroke="#dd9622" stroke-width="3.800" stroke-linecap="round"/><path d="M12 11.800l3 2.800" stroke="#f8cf72" stroke-width="1.600" stroke-linecap="round"/></svg>
<svg class="r" style="left:462px;top:46px" width="18" height="17" viewBox="0 0 18 17"><circle cx="7" cy="6.800" r="5.800" fill="#eaf4fb" stroke="#7f8790" stroke-width="1.300"/><path d="M3.500 5.500a4 4 0 0 1 4-2.500" stroke="#fff" stroke-width="1.200" fill="none"/><path d="M12 11.800l3 2.800" stroke="#dd9622" stroke-width="3.800" stroke-linecap="round"/><path d="M12 11.800l3 2.800" stroke="#f8cf72" stroke-width="1.600" stroke-linecap="round"/><text x="7" y="10" text-anchor="middle" font-size="8.500" font-weight="bold" fill="#d8141f">%</text></svg>
<div class="r" style="left:483px;top:45px;width:1px;height:19px;background:#d2d2d2;"></div>
<svg class="r" style="left:491px;top:47px" width="15" height="15" viewBox="0 0 15 15"><rect x=".5" y=".5" width="14" height="14" fill="#ececec" stroke="#b6b6b6"/><text x="7.500" y="12.300" text-anchor="middle" font-size="13" fill="#b4b4b4" class="sf">A</text></svg>
<svg class="r" style="left:513.5px;top:47px" width="15" height="15" viewBox="0 0 15 15"><rect x=".5" y=".5" width="14" height="14" fill="#e6e6e6" stroke="#bcbcbc"/><path d="M2.500 3.500h10M2.500 6h4M2.500 8.500h4M2.500 11h4" stroke="#c4c4c4" stroke-width="1"/><text x="10.300" y="12.600" text-anchor="middle" font-size="10" fill="#a8a8a8">¶</text></svg>
<div class="r" style="left:534px;top:45px;width:1px;height:19px;background:#d2d2d2;"></div>
<svg class="r" style="left:540px;top:45px" width="18" height="18" viewBox="0 0 18 18"><text x="8" y="6.800" text-anchor="middle" font-size="7" font-weight="bold" fill="#bdbdbd">ABC</text><path d="M1.500 10.500l2-1.200l3.200 4.200L15.500 3.500l1.400 1L7 17.200z" fill="#d2d2d2" stroke="#bdbdbd" stroke-width=".7"/></svg>
<svg class="r" style="left:564px;top:47px" width="15" height="15" viewBox="0 0 15 15"><path d="M.5 14.500V3l2-1.800l2 1.800v11.500z M5.200 14.500V2l2.300-1.500L9.800 2v12.500z M10.500 14.500V4l2-1.800l2 1.800v10.500z" fill="#cfcfcf" stroke="#bcbcbc" stroke-width=".8"/></svg>
<div class="r" style="left:585px;top:45px;width:1px;height:19px;background:#d2d2d2;"></div>
<svg class="r" style="left:591px;top:45px" width="18" height="19" viewBox="0 0 18 19"><text transform="translate(9.300 13.500) scale(1.49 .86)" x="0" y="0" text-anchor="middle" font-size="19" font-weight="bold" fill="#74c038" stroke="#3b7d12" stroke-width="1.200" paint-order="stroke">¶</text></svg>
<div class="r" style="left:613px;top:45px;width:1px;height:19px;background:#d2d2d2;"></div>
<svg class="r" style="left:619.8px;top:46.8px" width="16" height="16" viewBox="0 0 16 16"><circle cx="8" cy="8" r="7.500" fill="#4f9424"/><circle cx="8" cy="8" r="6.200" fill="#69b534" stroke="#b9e08e" stroke-width=".9"/><text x="8" y="11.300" text-anchor="middle" font-size="9.500" font-weight="bold" fill="#fff">P</text></svg>
<svg class="r" style="left:642.3px;top:46.8px" width="16" height="16" viewBox="0 0 16 16"><circle cx="8" cy="8" r="7.500" fill="#e6761a"/><circle cx="8" cy="8" r="6.200" fill="#f6962a" stroke="#fbd09a" stroke-width=".9"/><text x="8" y="11.300" text-anchor="middle" font-size="9.500" font-weight="bold" fill="#fff">S</text></svg>
<svg class="r" style="left:664.8px;top:46.8px" width="16" height="16" viewBox="0 0 16 16"><circle cx="8" cy="8" r="7.500" fill="#f0a818"/><circle cx="8" cy="8" r="6.200" fill="#fbc02c" stroke="#fde6a0" stroke-width=".9"/><text x="8" y="11.300" text-anchor="middle" font-size="9.500" font-weight="bold" fill="#fff">B</text></svg>
<svg class="r" style="left:687px;top:46.8px" width="16" height="16" viewBox="0 0 16 16"><circle cx="8" cy="8" r="7.500" fill="#a8a8a8"/><circle cx="8" cy="8" r="6.200" fill="#c6c6c6" stroke="#e2e2e2" stroke-width=".9"/></svg>
<svg class="r" style="left:688.5px;top:48px" width="13" height="13" viewBox="0 0 13 13"><path d="M3.500 8.500c0-3 2-4.500 4-4.200c2 .3 3 2 2 3.500c-1.200 1.200-3 .5-3.600 1.800c.8 1.200 2.800 1 4 .2" fill="none" stroke="#e9e9e9" stroke-width="1.500"/></svg>
<div class="r" style="left:708px;top:45px;width:1px;height:19px;background:#d2d2d2;"></div>
<svg class="r" style="left:715px;top:48px" width="16" height="13" viewBox="0 0 16 13"><path d="M1 7.500c0-4 3-6.500 7.500-6.500s6.500 3 6.500 6.500c0 2.500-1.500 3.500-3.500 3.500h-6c-3 0-4.500-1-4.500-3.500z" fill="#8d96d2" stroke="#6a72b0" stroke-width=".8"/><path d="M1.500 5.500l3 1.500l-1 3.500l-2.300-2z" fill="#d04a58"/><path d="M6.500 1.500h4l.5 2.500h-5z" fill="#f0f2fa"/><path d="M6 9.500l4.500-4.500M7.800 4.800h3v3" stroke="#2ea84a" stroke-width="1.500" fill="none"/></svg>
<svg class="r" style="left:743px;top:47.5px" width="9" height="6" viewBox="0 0 9 6"><path d="M.8 .5L3.300 2.800L.8 5.100M4.800 .5L7.300 2.800L4.800 5.100" fill="none" stroke="#111" stroke-width="1.500"/></svg>
<svg class="r" style="left:9px;top:73px" width="15" height="17" viewBox="0 0 15 17"><path d="M1 .8l12.500 7.400l-5.200 1.400l3.600 5.600l-2.600 1.500l-3.400-5.800L2 14.500z" fill="#c3d4f3" stroke="#4a6ab2" stroke-width="1.100" stroke-linejoin="round"/></svg>
<svg class="r" style="left:32.2px;top:73.2px" width="16.6" height="16.6" viewBox="0 0 17 17" preserveAspectRatio="none"><rect x="1.500" y="1.500" width="14" height="14" fill="#eef2fa" stroke="#1a1a1a" stroke-width="1.300"/><rect x="2.600" y="2.600" width="11.800" height="11.800" fill="#e4eaf6"/><path d="M4 5.500h9M4 8h9M4 10.500h9M4 13h9" stroke="#9aa8c6" stroke-width="1.200"/><rect x="0.4" y="0.4" width="2.600" height="2.600" fill="#f8d648" stroke="#1a1a1a" stroke-width=".7"/><rect x="14.4" y="0.4" width="2.600" height="2.600" fill="#f8d648" stroke="#1a1a1a" stroke-width=".7"/><rect x="0.4" y="14.4" width="2.600" height="2.600" fill="#f8d648" stroke="#1a1a1a" stroke-width=".7"/><rect x="14.4" y="14.4" width="2.600" height="2.600" fill="#f8d648" stroke="#1a1a1a" stroke-width=".7"/></svg>
<svg class="r" style="left:55.7px;top:73.2px" width="16.6" height="16.6" viewBox="0 0 17 17" preserveAspectRatio="none"><rect x="1.500" y="1.500" width="14" height="14" fill="#eef2fa" stroke="#1a1a1a" stroke-width="1.300"/><rect x="2.200" y="2.200" width="12.600" height="12.600" fill="#f4f8fb"/><circle cx="8.500" cy="4.600" r="2" fill="#f6cf4c"/><path d="M2.200 14.800V11l4-4.500l4 4.500l2-2l2.600 2.800v3z" fill="#6dbb45"/><path d="M2.200 11l4-4.500l4 4.500" fill="none" stroke="#a8dc84" stroke-width=".8"/><rect x="0.4" y="0.4" width="2.600" height="2.600" fill="#f8d648" stroke="#1a1a1a" stroke-width=".7"/><rect x="14.4" y="0.4" width="2.600" height="2.600" fill="#f8d648" stroke="#1a1a1a" stroke-width=".7"/><rect x="0.4" y="14.4" width="2.600" height="2.600" fill="#f8d648" stroke="#1a1a1a" stroke-width=".7"/><rect x="14.4" y="14.4" width="2.600" height="2.600" fill="#f8d648" stroke="#1a1a1a" stroke-width=".7"/></svg>
<svg class="r" style="left:79.2px;top:73.2px" width="16.6" height="16.6" viewBox="0 0 17 17" preserveAspectRatio="none"><rect x="1.500" y="1.500" width="14" height="14" fill="#eef2fa" stroke="#1a1a1a" stroke-width="1.300"/><rect x="2.200" y="2.200" width="12.600" height="12.600" fill="#f0f2f8"/><rect x="3.500" y="8.500" width="2.400" height="6" fill="#d85a62"/><rect x="7" y="3.500" width="2.400" height="11" fill="#5f86d6"/><rect x="10.500" y="5.500" width="2.400" height="9" fill="#f1cf62"/><rect x="0.4" y="0.4" width="2.600" height="2.600" fill="#f8d648" stroke="#1a1a1a" stroke-width=".7"/><rect x="14.4" y="0.4" width="2.600" height="2.600" fill="#f8d648" stroke="#1a1a1a" stroke-width=".7"/><rect x="0.4" y="14.4" width="2.600" height="2.600" fill="#f8d648" stroke="#1a1a1a" stroke-width=".7"/><rect x="14.4" y="14.4" width="2.600" height="2.600" fill="#f8d648" stroke="#1a1a1a" stroke-width=".7"/></svg>
<svg class="r" style="left:101.0px;top:78.5px" width="10" height="7.0" viewBox="-1 -1 10 7.0"><path d="M0 0L4.0 4.0L8 0" fill="none" stroke="#5e5e5e" stroke-width="1.2"/></svg>
<svg class="r" style="left:117.7px;top:73.2px" width="16.6" height="16.6" viewBox="0 0 17 17" preserveAspectRatio="none"><rect x="1.500" y="1.500" width="14" height="14" fill="#eef2fa" stroke="#1a1a1a" stroke-width="1.300"/><rect x="2.200" y="2.200" width="12.600" height="12.600" fill="#dfe8fa"/><text x="8.500" y="11.500" text-anchor="middle" font-size="7.600" font-weight="bold" fill="#3c5cae">ole</text><rect x="0.4" y="0.4" width="2.600" height="2.600" fill="#f8d648" stroke="#1a1a1a" stroke-width=".7"/><rect x="14.4" y="0.4" width="2.600" height="2.600" fill="#f8d648" stroke="#1a1a1a" stroke-width=".7"/><rect x="0.4" y="14.4" width="2.600" height="2.600" fill="#f8d648" stroke="#1a1a1a" stroke-width=".7"/><rect x="14.4" y="14.4" width="2.600" height="2.600" fill="#f8d648" stroke="#1a1a1a" stroke-width=".7"/></svg>
<svg class="r" style="left:141.2px;top:73.2px" width="16.6" height="16.6" viewBox="0 0 17 17" preserveAspectRatio="none"><rect x="1.500" y="1.500" width="14" height="14" fill="#eef2fa" stroke="#1a1a1a" stroke-width="1.300"/><rect x="2.200" y="2.200" width="12.600" height="12.600" fill="#e6ecf8"/><text x="8.600" y="13.200" text-anchor="middle" font-size="13.500" font-weight="bold" fill="#2f5fc8">Σ</text><rect x="0.4" y="0.4" width="2.600" height="2.600" fill="#f8d648" stroke="#1a1a1a" stroke-width=".7"/><rect x="14.4" y="0.4" width="2.600" height="2.600" fill="#f8d648" stroke="#1a1a1a" stroke-width=".7"/><rect x="0.4" y="14.4" width="2.600" height="2.600" fill="#f8d648" stroke="#1a1a1a" stroke-width=".7"/><rect x="14.4" y="14.4" width="2.600" height="2.600" fill="#f8d648" stroke="#1a1a1a" stroke-width=".7"/></svg>
<svg class="r" style="left:164.6px;top:73.2px" width="16.6" height="16.6" viewBox="0 0 17 17" preserveAspectRatio="none"><rect x="1.500" y="1.500" width="14" height="14" fill="#eef2fa" stroke="#1a1a1a" stroke-width="1.300"/><rect x="2.200" y="2.200" width="12.600" height="12.600" fill="#5a9e2c"/><circle cx="8.500" cy="8.500" r="5.600" fill="#6bb336" stroke="#b5dc8c" stroke-width=".8"/><text x="8.500" y="12" text-anchor="middle" font-size="9.500" font-weight="bold" fill="#fff">P</text><rect x="0.4" y="0.4" width="2.600" height="2.600" fill="#f8d648" stroke="#1a1a1a" stroke-width=".7"/><rect x="14.4" y="0.4" width="2.600" height="2.600" fill="#f8d648" stroke="#1a1a1a" stroke-width=".7"/><rect x="0.4" y="14.4" width="2.600" height="2.600" fill="#f8d648" stroke="#1a1a1a" stroke-width=".7"/><rect x="14.4" y="14.4" width="2.600" height="2.600" fill="#f8d648" stroke="#1a1a1a" stroke-width=".7"/></svg>
<svg class="r" style="left:188.0px;top:73.2px" width="16.6" height="16.6" viewBox="0 0 17 17" preserveAspectRatio="none"><rect x="1.500" y="1.500" width="14" height="14" fill="#eef2fa" stroke="#1a1a1a" stroke-width="1.300"/><rect x="2.200" y="2.200" width="12.600" height="12.600" fill="#5a9e2c"/><circle cx="8.500" cy="8.500" r="5.600" fill="#6bb336" stroke="#b5dc8c" stroke-width=".8"/><text x="8.500" y="12" text-anchor="middle" font-size="9.500" font-weight="bold" fill="#fff">P</text><rect x="7" y="11" width="1.800" height="3.800" fill="#d83a4a"/><rect x="9.200" y="10" width="1.800" height="4.800" fill="#e8ecf6"/><rect x="11.400" y="9.500" width="1.800" height="5.300" fill="#bcd0f0"/><rect x="0.4" y="0.4" width="2.600" height="2.600" fill="#f8d648" stroke="#1a1a1a" stroke-width=".7"/><rect x="14.4" y="0.4" width="2.600" height="2.600" fill="#f8d648" stroke="#1a1a1a" stroke-width=".7"/><rect x="0.4" y="14.4" width="2.600" height="2.600" fill="#f8d648" stroke="#1a1a1a" stroke-width=".7"/><rect x="14.4" y="14.4" width="2.600" height="2.600" fill="#f8d648" stroke="#1a1a1a" stroke-width=".7"/></svg>
<svg class="r" style="left:211.39999999999998px;top:73.2px" width="16.6" height="16.6" viewBox="0 0 17 17" preserveAspectRatio="none"><rect x="1.500" y="1.500" width="14" height="14" fill="#eef2fa" stroke="#1a1a1a" stroke-width="1.300"/><rect x="2.200" y="2.200" width="12.600" height="12.600" fill="#ec8218"/><circle cx="8.500" cy="8.500" r="5.600" fill="#f6962a" stroke="#fbd09a" stroke-width=".8"/><text x="8.500" y="12" text-anchor="middle" font-size="9.500" font-weight="bold" fill="#fff">S</text><rect x="0.4" y="0.4" width="2.600" height="2.600" fill="#f8d648" stroke="#1a1a1a" stroke-width=".7"/><rect x="14.4" y="0.4" width="2.600" height="2.600" fill="#f8d648" stroke="#1a1a1a" stroke-width=".7"/><rect x="0.4" y="14.4" width="2.600" height="2.600" fill="#f8d648" stroke="#1a1a1a" stroke-width=".7"/><rect x="14.4" y="14.4" width="2.600" height="2.600" fill="#f8d648" stroke="#1a1a1a" stroke-width=".7"/></svg>
<div class="r" style="left:232px;top:72px;width:1px;height:19px;background:#d2d2d2;"></div>
<svg class="r" style="left:239px;top:74px" width="17" height="15" viewBox="0 0 17 15"><path d="M1.200 12.400L14 1l1.600 1.700L2.800 14.200z" fill="#f6f6f6" stroke="#8c8c8c" stroke-width=".9"/></svg>
<svg class="r" style="left:256.5px;top:79.0px" width="10" height="7.0" viewBox="-1 -1 10 7.0"><path d="M0 0L4.0 4.0L8 0" fill="none" stroke="#5e5e5e" stroke-width="1.2"/></svg>
<svg class="r" style="left:0;top:0" width="0" height="0"><defs><linearGradient id="gsh" x1="0" y1="0" x2="1" y2="1"><stop offset="0" stop-color="#fff"/><stop offset=".45" stop-color="#ededed"/><stop offset="1" stop-color="#b2b2b2"/></linearGradient><linearGradient id="gta" x1="0" y1="0" x2="0" y2="1"><stop offset="0" stop-color="#a8ccfa"/><stop offset="1" stop-color="#356ad0"/></linearGradient></defs></svg>
<svg class="r" style="left:274px;top:74px" width="17" height="15" viewBox="0 0 17 15"><rect x=".6" y=".6" width="15" height="13.800" fill="url(#gsh)" stroke="#7e7e7e" stroke-width="1.100"/></svg>
<svg class="r" style="left:297.5px;top:74px" width="17" height="15" viewBox="0 0 17 15"><rect x=".6" y=".6" width="14.600" height="13.800" rx="3" fill="url(#gsh)" stroke="#7e7e7e" stroke-width="1.100"/></svg>
<svg class="r" style="left:320px;top:73px" width="18" height="17" viewBox="0 0 18 17"><circle cx="8.700" cy="8.500" r="7.900" fill="url(#gsh)" stroke="#7e7e7e" stroke-width="1.100"/></svg>
<svg class="r" style="left:344px;top:73px" width="18" height="17" viewBox="0 0 18 17"><circle cx="4.800" cy="4.600" r="4" fill="url(#gsh)" stroke="#7e7e7e" stroke-width="1.100"/><path d="M7 6h4.500V2.800L16.600 8l-5.100 5.200V10H7z" fill="url(#gsh)" stroke="#7e7e7e" stroke-width="1.100"/><rect x="3" y="9.500" width="6.500" height="6.500" fill="url(#gsh)" stroke="#7e7e7e" stroke-width="1.100"/></svg>
<svg class="r" style="left:362.0px;top:79.0px" width="10" height="7.0" viewBox="-1 -1 10 7.0"><path d="M0 0L4.0 4.0L8 0" fill="none" stroke="#5e5e5e" stroke-width="1.2"/></svg>
<svg class="r" style="left:377px;top:70px" width="20" height="21" viewBox="0 0 20 21"><text transform="translate(10 18.600) scale(1.02 1)" x="0" y="0" text-anchor="middle" font-size="23" font-weight="bold" fill="url(#gta)" stroke="#6f9be6" stroke-width=".5">A</text></svg>
<div class="r" style="left:402px;top:72px;width:1px;height:19px;background:#d2d2d2;"></div>
<svg class="r" style="left:408px;top:73.5px" width="16" height="16" viewBox="0 0 16 16"><rect x="2.500" y="2.500" width="7.500" height="7.500" fill="#ededed" stroke="#c2c2c2"/><rect x="6.500" y="6.500" width="7.500" height="7.500" fill="#e6e6e6" stroke="#c2c2c2"/><path d="M.5 .5h2v2h-2zM13 .5h2v2h-2zM.5 13h2v2h-2zM13 13h2v2h-2z" fill="#b4b4b4"/></svg>
<svg class="r" style="left:432px;top:73px" width="16" height="17" viewBox="0 0 16 17"><rect x=".6" y=".6" width="10" height="5" fill="#eef1f8" stroke="#55679a" stroke-width="1"/><path d="M2 2.500h7M2 4.200h7" stroke="#8a9ac4" stroke-width=".8"/><rect x="5" y="11.400" width="10" height="5" fill="#eef1f8" stroke="#6a7a9a" stroke-width="1"/><path d="M6.500 13.300h7M6.500 15h7" stroke="#8a9ac4" stroke-width=".8"/><path d="M5.500 6v2.500h4v2.800" fill="none" stroke="#d8141f" stroke-width="1.800"/></svg>
<div class="r" style="left:454px;top:72px;width:1px;height:19px;background:#d2d2d2;"></div>
<svg class="r" style="left:460px;top:73px" width="17" height="17" viewBox="0 0 17 17"><rect x=".6" y=".6" width="10.500" height="10.500" fill="#dfe5f5" stroke="#6d80a8" stroke-width="1"/><path d="M9.200 1.200c-1 1.800-.6 3.400.8 4.200v6.200c-1.400.8-1.800 2.400-.8 4.200h1.200v-2.500h2.400v2.500h1.200c1-1.800.6-3.400-.8-4.200V5.400c1.400-.8 1.800-2.400.8-4.200h-1.200v2.500h-2.400V1.200z" fill="#8a8a8a" stroke="#5a5a5a" stroke-width=".7"/></svg>
<div class="r" style="left:485px;top:71px;width:151px;height:21px;background:#fff;border:1px solid #a3bde3;"></div>
<span class="t" style="left:489.0px;top:74.0px;height:16px;line-height:16px;font-size:12px;color:#000;transform:scaleX(0.928);">TextArtObject3</span>
<svg class="r" style="left:622.3px;top:78.8px" width="11" height="7.5" viewBox="-1 -1 11 7.5"><path d="M0 0L4.5 4.5L9 0" fill="none" stroke="#5e5e5e" stroke-width="1.2"/></svg>
<svg class="r" style="left:641px;top:75px" width="13" height="13" viewBox="0 0 13 13"><path d="M1.5 0v13M0 1.5h13" stroke="#5d92d6" stroke-width="1.100"/><path d="M4.1 0v13M0 4.1h13" stroke="#5d92d6" stroke-width="1.100"/><path d="M6.7 0v13M0 6.7h13" stroke="#5d92d6" stroke-width="1.100"/><path d="M9.3 0v13M0 9.3h13" stroke="#5d92d6" stroke-width="1.100"/><path d="M11.9 0v13M0 11.9h13" stroke="#5d92d6" stroke-width="1.100"/></svg>
<svg class="r" style="left:656.5px;top:79.0px" width="10" height="7.0" viewBox="-1 -1 10 7.0"><path d="M0 0L4.0 4.0L8 0" fill="none" stroke="#5e5e5e" stroke-width="1.2"/></svg>
<svg class="r" style="left:678px;top:75px" width="9" height="6" viewBox="0 0 9 6"><path d="M.8 .5L3.300 2.800L.8 5.100M4.800 .5L7.300 2.800L4.800 5.100" fill="none" stroke="#111" stroke-width="1.500"/></svg>
<div class="r" style="left:566px;top:176px;width:697px;height:493px;background:#f0f0f0;border:1px solid #6a6a6a;box-shadow:0 3px 14px rgba(0,0,0,.38),0 0 4px rgba(0,0,0,.2);"></div>
<div class="r" style="left:567px;top:177px;width:695px;height:23px;background:#fff;"></div>
<span class="t" style="left:569.6px;top:180.0px;height:16px;line-height:16px;font-size:12px;color:#000;transform:scaleX(0.917);">Object Properties</span>
<svg class="r" style="left:1242px;top:182px" width="13" height="13" viewBox="0 0 13 13"><path d="M1.5 1.5l10 10M11.5 1.5l-10 10" stroke="#222" stroke-width="1.1" fill="none"/></svg>
<div class="r" style="left:575px;top:235px;width:677px;height:390px;background:#fff;border:1px solid #d9d9d9;"></div>
<div class="r" style="left:575px;top:214px;width:51px;height:23px;background:#fff;border:1px solid #d9d9d9;border-bottom:none;"></div>
<span class="t" style="left:583.0px;top:217.5px;height:16px;line-height:16px;font-size:12px;color:#000;transform:scaleX(0.944);">Layout</span>
<div class="r" style="left:627px;top:216px;width:52px;height:20px;background:#f0f0f0;border:1px solid #d9d9d9;border-left:none;"></div>
<span class="t" style="left:633.0px;top:217.5px;height:16px;line-height:16px;font-size:12px;color:#000;transform:scaleX(0.947);">Format</span>
<div class="r" style="left:679px;top:216px;width:47px;height:20px;background:#f0f0f0;border:1px solid #d9d9d9;border-left:none;"></div>
<span class="t" style="left:686.0px;top:217.5px;height:16px;line-height:16px;font-size:12px;color:#000;transform:scaleX(0.941);">Filling</span>
<div class="r" style="left:726px;top:216px;width:42px;height:20px;background:#f0f0f0;border:1px solid #d9d9d9;border-left:none;"></div>
<span class="t" style="left:733.0px;top:217.5px;height:16px;line-height:16px;font-size:12px;color:#000;transform:scaleX(0.872);">Lines</span>
<div class="r" style="left:768px;top:216px;width:56px;height:20px;background:#f0f0f0;border:1px solid #d9d9d9;border-left:none;"></div>
<span class="t" style="left:775.0px;top:217.5px;height:16px;line-height:16px;font-size:12px;color:#000;transform:scaleX(0.911);">Shadow</span>
<div class="r" style="left:824px;top:216px;width:30px;height:20px;background:#f0f0f0;border:1px solid #d9d9d9;border-left:none;"></div>
<span class="t" style="left:831.0px;top:217.5px;height:16px;line-height:16px;font-size:12px;color:#000;transform:scaleX(0.848);">3D</span>
<div class="r" style="left:854px;top:216px;width:49px;height:20px;background:#f0f0f0;border:1px solid #d9d9d9;border-left:none;"></div>
<span class="t" style="left:861.0px;top:217.5px;height:16px;line-height:16px;font-size:12px;color:#000;transform:scaleX(0.905);">Effects</span>
<div class="r" style="left:903px;top:216px;width:68px;height:20px;background:#f0f0f0;border:1px solid #d9d9d9;border-left:none;"></div>
<span class="t" style="left:911.0px;top:217.5px;height:16px;line-height:16px;font-size:12px;color:#000;transform:scaleX(0.914);">Properties</span>
<div class="r" style="left:971px;top:216px;width:37px;height:20px;background:#f0f0f0;border:1px solid #d9d9d9;border-left:none;"></div>
<span class="t" style="left:977.5px;top:217.5px;height:16px;line-height:16px;font-size:12px;color:#000;transform:scaleX(0.909);">Text</span>
<div class="r" style="left:1008px;top:216px;width:79px;height:20px;background:#f0f0f0;border:1px solid #d9d9d9;border-left:none;"></div>
<span class="t" style="left:1015.0px;top:217.5px;height:16px;line-height:16px;font-size:12px;color:#000;transform:scaleX(0.956);">Deformation</span>
<div class="r" style="left:588px;top:256px;width:352px;height:66px;border:1px solid #dcdcdc;"></div><div class="r" style="left:592px;top:254px;width:100px;height:5px;background:#fff;"></div><span class="t" style="left:593.9px;top:248.3px;height:16px;line-height:16px;font-size:12px;color:#000;transform:scaleX(0.952);">Horizontal position</span>
<div class="r" style="left:588px;top:336px;width:352px;height:67px;border:1px solid #dcdcdc;"></div><div class="r" style="left:592px;top:334px;width:85px;height:5px;background:#fff;"></div><span class="t" style="left:593.9px;top:328.3px;height:16px;line-height:16px;font-size:12px;color:#000;transform:scaleX(0.940);">Vertical position</span>
<div class="r" style="left:952px;top:256px;width:214px;height:147px;border:1px solid #dcdcdc;"></div><div class="r" style="left:956px;top:254px;width:75px;height:5px;background:#fff;"></div><span class="t" style="left:957.9px;top:248.3px;height:16px;line-height:16px;font-size:12px;color:#000;transform:scaleX(0.927);">Wrap margins</span>
<div class="r" style="left:588px;top:418px;width:249px;height:87px;border:1px solid #dcdcdc;"></div><div class="r" style="left:592px;top:416px;width:76px;height:5px;background:#fff;"></div><span class="t" style="left:593.9px;top:410.3px;height:16px;line-height:16px;font-size:12px;color:#000;transform:scaleX(0.945);">Text <u>w</u>rapping</span>
<div class="r" style="left:849px;top:418px;width:317px;height:87px;border:1px solid #dcdcdc;"></div><div class="r" style="left:853px;top:416px;width:47px;height:5px;background:#fff;"></div><span class="t" style="left:854.9px;top:410.3px;height:16px;line-height:16px;font-size:12px;color:#000;transform:scaleX(0.960);"><u>C</u>ontour</span>
<div class="r" style="left:588px;top:519px;width:249px;height:63px;border:1px solid #dcdcdc;"></div><div class="r" style="left:592px;top:517px;width:39px;height:5px;background:#fff;"></div><span class="t" style="left:593.9px;top:511.3px;height:16px;line-height:16px;font-size:12px;color:#000;transform:scaleX(0.952);">Object</span>
<div class="r" style="left:849px;top:519px;width:317px;height:63px;border:1px solid #dcdcdc;"></div><div class="r" style="left:853px;top:517px;width:117px;height:5px;background:#fff;"></div><span class="t" style="left:854.9px;top:511.3px;height:16px;line-height:16px;font-size:12px;color:#000;transform:scaleX(0.940);">When object is moved</span>
<span class="t" style="left:598.0px;top:268.5px;height:16px;line-height:16px;font-size:12px;color:#000;transform:scaleX(0.923);">Po<u>s</u>ition:</span>
<span class="t" style="left:721.0px;top:268.5px;height:16px;line-height:16px;font-size:12px;color:#000;transform:scaleX(0.900);">Rel<u>a</u>tive to</span>
<span class="t" style="left:843.5px;top:268.5px;height:16px;line-height:16px;font-size:12px;color:#000;transform:scaleX(0.925);"><u>O</u>ffset:</span>
<div class="r" style="left:598px;top:287px;width:110px;height:20px;background:#fff;border:1px solid #a3bde3;"></div><div class="r" style="left:599.5px;top:289px;width:90px;height:16px;background:#3399ff;"></div><span class="t" style="left:601.0px;top:289.5px;height:16px;line-height:16px;font-size:12px;color:#fff;transform:scaleX(0.974);">Left</span><svg class="r" style="left:693.9px;top:293.8px" width="11" height="7.5" viewBox="-1 -1 11 7.5"><path d="M0 0L4.5 4.5L9 0" fill="none" stroke="#444" stroke-width="1.2"/></svg>
<div class="r" style="left:720px;top:287px;width:110px;height:20px;background:#fff;border:1px solid #a3bde3;"></div><span class="t" style="left:723.5px;top:289.5px;height:16px;line-height:16px;font-size:12px;color:#000;transform:scaleX(0.856);">Page</span><svg class="r" style="left:815.9px;top:293.8px" width="11" height="7.5" viewBox="-1 -1 11 7.5"><path d="M0 0L4.5 4.5L9 0" fill="none" stroke="#444" stroke-width="1.2"/></svg>
<div class="r" style="left:843px;top:287px;width:73px;height:20px;background:#fff;border:1px solid #a3bde3;"></div>
<span class="t" style="left:847.5px;top:289.0px;height:16px;line-height:16px;font-size:12px;color:#000;transform:scaleX(0.871);">10,05 cm</span>
<span class="t" style="left:598.0px;top:349.0px;height:16px;line-height:16px;font-size:12px;color:#000;transform:scaleX(0.923);">Pos<u>i</u>tion:</span>
<span class="t" style="left:721.0px;top:349.0px;height:16px;line-height:16px;font-size:12px;color:#000;transform:scaleX(0.900);">Relati<u>v</u>e to</span>
<span class="t" style="left:843.5px;top:349.0px;height:16px;line-height:16px;font-size:12px;color:#000;transform:scaleX(0.925);">O<u>f</u>fset:</span>
<div class="r" style="left:598px;top:369px;width:110px;height:20px;background:#fff;border:1px solid #a3bde3;"></div><span class="t" style="left:601.5px;top:371.5px;height:16px;line-height:16px;font-size:12px;color:#000;transform:scaleX(0.956);">Top</span><svg class="r" style="left:693.9px;top:375.8px" width="11" height="7.5" viewBox="-1 -1 11 7.5"><path d="M0 0L4.5 4.5L9 0" fill="none" stroke="#444" stroke-width="1.2"/></svg>
<div class="r" style="left:720px;top:369px;width:110px;height:20px;background:#fff;border:1px solid #a3bde3;"></div><span class="t" style="left:723.5px;top:371.5px;height:16px;line-height:16px;font-size:12px;color:#000;transform:scaleX(0.856);">Page</span><svg class="r" style="left:815.9px;top:375.8px" width="11" height="7.5" viewBox="-1 -1 11 7.5"><path d="M0 0L4.5 4.5L9 0" fill="none" stroke="#444" stroke-width="1.2"/></svg>
<div class="r" style="left:843px;top:369px;width:73px;height:20px;background:#fff;border:1px solid #a3bde3;"></div>
<span class="t" style="left:847.5px;top:371.0px;height:16px;line-height:16px;font-size:12px;color:#000;transform:scaleX(0.879);">5,08 cm</span>
<span class="t" style="left:1041.5px;top:280.3px;height:16px;line-height:16px;font-size:12px;color:#000;transform:scaleX(0.899);"><u>L</u>eft:</span>
<div class="r" style="left:1068px;top:278px;width:76px;height:19px;background:#fff;border:1px solid #a3bde3;"></div><div class="r" style="left:1130px;top:278px;width:14px;height:19px;background:#f0f0f0;border:1px solid #a3bde3;"></div><div class="r" style="left:1130px;top:287.0px;width:14px;height:1px;background:#c8c8c8;"></div><svg class="r" style="left:1133px;top:278px" width="8" height="19" viewBox="0 0 8 19"><path d="M0.8 6.7L4 3.2L7.2 6.7Z M0.8 12.3L4 15.8L7.2 12.3Z" fill="#444"/></svg><span class="t" style="left:1072.5px;top:280.0px;height:16px;line-height:16px;font-size:12px;color:#000;transform:scaleX(0.890);">0,25 cm</span>
<span class="t" style="left:1033.0px;top:308.4px;height:16px;line-height:16px;font-size:12px;color:#000;transform:scaleX(0.941);"><u>R</u>ight:</span>
<div class="r" style="left:1068px;top:307px;width:76px;height:19px;background:#fff;border:1px solid #a3bde3;"></div><div class="r" style="left:1130px;top:307px;width:14px;height:19px;background:#f0f0f0;border:1px solid #a3bde3;"></div><div class="r" style="left:1130px;top:316.0px;width:14px;height:1px;background:#c8c8c8;"></div><svg class="r" style="left:1133px;top:307px" width="8" height="19" viewBox="0 0 8 19"><path d="M0.8 6.7L4 3.2L7.2 6.7Z M0.8 12.3L4 15.8L7.2 12.3Z" fill="#444"/></svg><span class="t" style="left:1072.5px;top:309.0px;height:16px;line-height:16px;font-size:12px;color:#000;transform:scaleX(0.890);">0,25 cm</span>
<span class="t" style="left:1041.5px;top:336.6px;height:16px;line-height:16px;font-size:12px;color:#000;transform:scaleX(0.926);"><u>T</u>op:</span>
<div class="r" style="left:1068px;top:335px;width:76px;height:19px;background:#fff;border:1px solid #a3bde3;"></div><div class="r" style="left:1130px;top:335px;width:14px;height:19px;background:#f0f0f0;border:1px solid #a3bde3;"></div><div class="r" style="left:1130px;top:344.0px;width:14px;height:1px;background:#c8c8c8;"></div><svg class="r" style="left:1133px;top:335px" width="8" height="19" viewBox="0 0 8 19"><path d="M0.8 6.7L4 3.2L7.2 6.7Z M0.8 12.3L4 15.8L7.2 12.3Z" fill="#444"/></svg><span class="t" style="left:1072.5px;top:337.0px;height:16px;line-height:16px;font-size:12px;color:#000;transform:scaleX(0.890);">0,25 cm</span>
<span class="t" style="left:1022.0px;top:364.8px;height:16px;line-height:16px;font-size:12px;color:#000;transform:scaleX(0.979);"><u>B</u>ottom:</span>
<div class="r" style="left:1068px;top:363px;width:76px;height:19px;background:#fff;border:1px solid #a3bde3;"></div><div class="r" style="left:1130px;top:363px;width:14px;height:19px;background:#f0f0f0;border:1px solid #a3bde3;"></div><div class="r" style="left:1130px;top:372.0px;width:14px;height:1px;background:#c8c8c8;"></div><svg class="r" style="left:1133px;top:363px" width="8" height="19" viewBox="0 0 8 19"><path d="M0.8 6.7L4 3.2L7.2 6.7Z M0.8 12.3L4 15.8L7.2 12.3Z" fill="#444"/></svg><span class="t" style="left:1072.5px;top:365.0px;height:16px;line-height:16px;font-size:12px;color:#000;transform:scaleX(0.890);">0,25 cm</span>
<div class="r" style="left:648px;top:435px;width:34px;height:33px;background:#fff;border:1.5px solid #2b2b2b;border-radius:1px;"></div>
<svg class="r" style="left:606px;top:438px" width="27" height="28" viewBox="0 0 27 28"><rect x="0" y="0.4" width="27" height="1.2" fill="#b5cde8"/><rect x="0" y="3.2" width="27" height="1.2" fill="#b5cde8"/><rect x="0" y="22.9" width="27" height="1.2" fill="#86add9"/><rect x="0" y="25.7" width="27" height="1.2" fill="#86add9"/><path d="M7.8 5.5C6.2 6.8 5.7 9.4 6.7 11.6C7.2 12.6 7.9 13 8.5 13.3L8.3 15L7.5 18.4L8.5 19.8L10.3 20L9.6 18.6L10.9 15.9L15.2 15.5L15.3 19.8L16.5 19.8L16.7 15.6L17.5 15.1L19.3 19.2L20.5 19.4L18.9 14L18.7 11L20.9 9.6L20.4 8.6L19.3 8.2L18.7 6.9L17.6 7.6L16.8 10.6L14 11.4L9.4 11.6C8.2 11.4 7.4 10.4 7.2 9C7 7.6 7.6 6.5 8.5 5.9Z" fill="#2a2a2a"/></svg>
<svg class="r" style="left:652px;top:438px" width="27" height="28" viewBox="0 0 27 28"><rect x="0" y="0.4" width="27" height="1.2" fill="#b5cde8"/><rect x="0" y="3.2" width="27" height="1.2" fill="#b5cde8"/><rect x="0" y="22.9" width="27" height="1.2" fill="#86add9"/><rect x="0" y="25.7" width="27" height="1.2" fill="#86add9"/><rect x="0" y="6.0" width="3" height="1.2" fill="#b5cde8"/><rect x="24" y="6.0" width="3" height="1.2" fill="#b5cde8"/><rect x="0" y="8.8" width="3" height="1.2" fill="#b5cde8"/><rect x="24" y="8.8" width="3" height="1.2" fill="#b5cde8"/><rect x="0" y="11.6" width="3" height="1.2" fill="#b5cde8"/><rect x="24" y="11.6" width="3" height="1.2" fill="#b5cde8"/><rect x="0" y="14.4" width="3" height="1.2" fill="#b5cde8"/><rect x="24" y="14.4" width="3" height="1.2" fill="#b5cde8"/><rect x="0" y="17.2" width="3" height="1.2" fill="#b5cde8"/><rect x="24" y="17.2" width="3" height="1.2" fill="#b5cde8"/><rect x="0" y="20.1" width="3" height="1.2" fill="#b5cde8"/><rect x="24" y="20.1" width="3" height="1.2" fill="#b5cde8"/><path d="M7.8 5.5C6.2 6.8 5.7 9.4 6.7 11.6C7.2 12.6 7.9 13 8.5 13.3L8.3 15L7.5 18.4L8.5 19.8L10.3 20L9.6 18.6L10.9 15.9L15.2 15.5L15.3 19.8L16.5 19.8L16.7 15.6L17.5 15.1L19.3 19.2L20.5 19.4L18.9 14L18.7 11L20.9 9.6L20.4 8.6L19.3 8.2L18.7 6.9L17.6 7.6L16.8 10.6L14 11.4L9.4 11.6C8.2 11.4 7.4 10.4 7.2 9C7 7.6 7.6 6.5 8.5 5.9Z" fill="#2a2a2a"/></svg>
<svg class="r" style="left:698px;top:438px" width="27" height="28" viewBox="0 0 27 28"><rect x="0" y="0.4" width="27" height="1.2" fill="#b5cde8"/><rect x="0" y="3.2" width="27" height="1.2" fill="#b5cde8"/><rect x="0" y="22.9" width="27" height="1.2" fill="#86add9"/><rect x="0" y="25.7" width="27" height="1.2" fill="#86add9"/><rect x="0" y="6.0" width="5" height="1.2" fill="#b5cde8"/><rect x="12" y="6.0" width="15" height="1.2" fill="#b5cde8"/><rect x="0" y="8.8" width="5" height="1.2" fill="#b5cde8"/><rect x="16" y="8.8" width="11" height="1.2" fill="#b5cde8"/><rect x="0" y="11.6" width="6" height="1.2" fill="#b5cde8"/><rect x="18" y="11.6" width="9" height="1.2" fill="#b5cde8"/><rect x="0" y="14.4" width="6" height="1.2" fill="#b5cde8"/><rect x="22" y="14.4" width="5" height="1.2" fill="#b5cde8"/><rect x="0" y="17.2" width="6" height="1.2" fill="#b5cde8"/><rect x="22" y="17.2" width="5" height="1.2" fill="#b5cde8"/><rect x="0" y="20.1" width="7" height="1.2" fill="#b5cde8"/><rect x="21" y="20.1" width="6" height="1.2" fill="#b5cde8"/><path d="M7.8 5.5C6.2 6.8 5.7 9.4 6.7 11.6C7.2 12.6 7.9 13 8.5 13.3L8.3 15L7.5 18.4L8.5 19.8L10.3 20L9.6 18.6L10.9 15.9L15.2 15.5L15.3 19.8L16.5 19.8L16.7 15.6L17.5 15.1L19.3 19.2L20.5 19.4L18.9 14L18.7 11L20.9 9.6L20.4 8.6L19.3 8.2L18.7 6.9L17.6 7.6L16.8 10.6L14 11.4L9.4 11.6C8.2 11.4 7.4 10.4 7.2 9C7 7.6 7.6 6.5 8.5 5.9Z" fill="#2a2a2a"/></svg>
<svg class="r" style="left:744px;top:438px" width="27" height="28" viewBox="0 0 27 28"><rect x="0" y="0.4" width="27" height="1.2" fill="#b5cde8"/><rect x="0" y="3.2" width="27" height="1.2" fill="#b5cde8"/><rect x="0" y="6.0" width="27" height="1.2" fill="#b5cde8"/><rect x="0" y="8.8" width="27" height="1.2" fill="#b5cde8"/><rect x="0" y="11.6" width="27" height="1.2" fill="#b5cde8"/><rect x="0" y="14.4" width="27" height="1.2" fill="#b5cde8"/><rect x="0" y="17.2" width="27" height="1.2" fill="#b5cde8"/><rect x="0" y="20.1" width="27" height="1.2" fill="#b5cde8"/><rect x="0" y="22.9" width="27" height="1.2" fill="#86add9"/><rect x="0" y="25.7" width="27" height="1.2" fill="#86add9"/><path d="M7.8 5.5C6.2 6.8 5.7 9.4 6.7 11.6C7.2 12.6 7.9 13 8.5 13.3L8.3 15L7.5 18.4L8.5 19.8L10.3 20L9.6 18.6L10.9 15.9L15.2 15.5L15.3 19.8L16.5 19.8L16.7 15.6L17.5 15.1L19.3 19.2L20.5 19.4L18.9 14L18.7 11L20.9 9.6L20.4 8.6L19.3 8.2L18.7 6.9L17.6 7.6L16.8 10.6L14 11.4L9.4 11.6C8.2 11.4 7.4 10.4 7.2 9C7 7.6 7.6 6.5 8.5 5.9Z" fill="#2a2a2a"/><rect x="8" y="8.9" width="11" height="1" fill="#9fb9d8" opacity=".75"/><rect x="8" y="11.7" width="11" height="1" fill="#9fb9d8" opacity=".75"/><rect x="8" y="14.5" width="11" height="1" fill="#9fb9d8" opacity=".75"/><rect x="8" y="17.3" width="11" height="1" fill="#9fb9d8" opacity=".75"/></svg>
<svg class="r" style="left:790px;top:438px" width="27" height="28" viewBox="0 0 27 28"><rect x="0" y="0.4" width="27" height="1.2" fill="#b5cde8"/><rect x="0" y="3.2" width="27" height="1.2" fill="#b5cde8"/><rect x="0" y="6.0" width="27" height="1.2" fill="#b5cde8"/><rect x="0" y="8.8" width="27" height="1.2" fill="#b5cde8"/><rect x="0" y="11.6" width="27" height="1.2" fill="#b5cde8"/><rect x="0" y="14.4" width="27" height="1.2" fill="#b5cde8"/><rect x="0" y="17.2" width="27" height="1.2" fill="#b5cde8"/><rect x="0" y="20.1" width="27" height="1.2" fill="#b5cde8"/><rect x="0" y="22.9" width="27" height="1.2" fill="#86add9"/><rect x="0" y="25.7" width="27" height="1.2" fill="#86add9"/><path d="M7.8 5.5C6.2 6.8 5.7 9.4 6.7 11.6C7.2 12.6 7.9 13 8.5 13.3L8.3 15L7.5 18.4L8.5 19.8L10.3 20L9.6 18.6L10.9 15.9L15.2 15.5L15.3 19.8L16.5 19.8L16.7 15.6L17.5 15.1L19.3 19.2L20.5 19.4L18.9 14L18.7 11L20.9 9.6L20.4 8.6L19.3 8.2L18.7 6.9L17.6 7.6L16.8 10.6L14 11.4L9.4 11.6C8.2 11.4 7.4 10.4 7.2 9C7 7.6 7.6 6.5 8.5 5.9Z" fill="#2a2a2a"/></svg>
<span class="t" style="left:602.5px;top:481.0px;height:16px;line-height:16px;font-size:12px;color:#000;transform:scaleX(0.866);">Square</span>
<div class="r" style="left:863px;top:435px;width:34px;height:33px;background:#fff;border:1.5px solid #2b2b2b;border-radius:1px;"></div>
<svg class="r" style="left:867px;top:438px" width="27" height="28" viewBox="0 0 27 28"><rect x="0" y="0.4" width="27" height="1.2" fill="#b5cde8"/><rect x="0" y="3.2" width="27" height="1.2" fill="#b5cde8"/><rect x="0" y="22.9" width="27" height="1.2" fill="#86add9"/><rect x="0" y="25.7" width="27" height="1.2" fill="#86add9"/><rect x="0" y="6.0" width="3" height="1.2" fill="#b5cde8"/><rect x="24" y="6.0" width="3" height="1.2" fill="#b5cde8"/><rect x="0" y="8.8" width="3" height="1.2" fill="#b5cde8"/><rect x="24" y="8.8" width="3" height="1.2" fill="#b5cde8"/><rect x="0" y="11.6" width="3" height="1.2" fill="#b5cde8"/><rect x="24" y="11.6" width="3" height="1.2" fill="#b5cde8"/><rect x="0" y="14.4" width="3" height="1.2" fill="#b5cde8"/><rect x="24" y="14.4" width="3" height="1.2" fill="#b5cde8"/><rect x="0" y="17.2" width="3" height="1.2" fill="#b5cde8"/><rect x="24" y="17.2" width="3" height="1.2" fill="#b5cde8"/><rect x="0" y="20.1" width="3" height="1.2" fill="#b5cde8"/><rect x="24" y="20.1" width="3" height="1.2" fill="#b5cde8"/><path d="M7.8 5.5C6.2 6.8 5.7 9.4 6.7 11.6C7.2 12.6 7.9 13 8.5 13.3L8.3 15L7.5 18.4L8.5 19.8L10.3 20L9.6 18.6L10.9 15.9L15.2 15.5L15.3 19.8L16.5 19.8L16.7 15.6L17.5 15.1L19.3 19.2L20.5 19.4L18.9 14L18.7 11L20.9 9.6L20.4 8.6L19.3 8.2L18.7 6.9L17.6 7.6L16.8 10.6L14 11.4L9.4 11.6C8.2 11.4 7.4 10.4 7.2 9C7 7.6 7.6 6.5 8.5 5.9Z" fill="#2a2a2a"/></svg>
<svg class="r" style="left:913px;top:438px" width="27" height="28" viewBox="0 0 27 28"><rect x="0" y="0.4" width="27" height="1.2" fill="#b5cde8"/><rect x="0" y="3.2" width="27" height="1.2" fill="#b5cde8"/><rect x="0" y="22.9" width="27" height="1.2" fill="#86add9"/><rect x="0" y="25.7" width="27" height="1.2" fill="#86add9"/><path d="M7.8 5.5C6.2 6.8 5.7 9.4 6.7 11.6C7.2 12.6 7.9 13 8.5 13.3L8.3 15L7.5 18.4L8.5 19.8L10.3 20L9.6 18.6L10.9 15.9L15.2 15.5L15.3 19.8L16.5 19.8L16.7 15.6L17.5 15.1L19.3 19.2L20.5 19.4L18.9 14L18.7 11L20.9 9.6L20.4 8.6L19.3 8.2L18.7 6.9L17.6 7.6L16.8 10.6L14 11.4L9.4 11.6C8.2 11.4 7.4 10.4 7.2 9C7 7.6 7.6 6.5 8.5 5.9Z" fill="#2a2a2a"/></svg>
<svg class="r" style="left:959px;top:438px" width="27" height="28" viewBox="0 0 27 28"><rect x="0" y="0.4" width="27" height="1.2" fill="#b5cde8"/><rect x="0" y="3.2" width="27" height="1.2" fill="#b5cde8"/><rect x="0" y="22.9" width="27" height="1.2" fill="#86add9"/><rect x="0" y="25.7" width="27" height="1.2" fill="#86add9"/><path d="M7.8 5.5C6.2 6.8 5.7 9.4 6.7 11.6C7.2 12.6 7.9 13 8.5 13.3L8.3 15L7.5 18.4L8.5 19.8L10.3 20L9.6 18.6L10.9 15.9L15.2 15.5L15.3 19.8L16.5 19.8L16.7 15.6L17.5 15.1L19.3 19.2L20.5 19.4L18.9 14L18.7 11L20.9 9.6L20.4 8.6L19.3 8.2L18.7 6.9L17.6 7.6L16.8 10.6L14 11.4L9.4 11.6C8.2 11.4 7.4 10.4 7.2 9C7 7.6 7.6 6.5 8.5 5.9Z" fill="#2a2a2a"/></svg>
<svg class="r" style="left:1005px;top:438px" width="27" height="28" viewBox="0 0 27 28"><rect x="0" y="0.4" width="27" height="1.2" fill="#b5cde8"/><rect x="0" y="3.2" width="27" height="1.2" fill="#b5cde8"/><rect x="0" y="22.9" width="27" height="1.2" fill="#86add9"/><rect x="0" y="25.7" width="27" height="1.2" fill="#86add9"/><rect x="0" y="6.0" width="5" height="1.2" fill="#b5cde8"/><rect x="0" y="8.8" width="5" height="1.2" fill="#b5cde8"/><rect x="0" y="11.6" width="5" height="1.2" fill="#b5cde8"/><rect x="0" y="14.4" width="5" height="1.2" fill="#b5cde8"/><rect x="0" y="17.2" width="5" height="1.2" fill="#b5cde8"/><rect x="0" y="20.1" width="5" height="1.2" fill="#b5cde8"/><path d="M7.8 5.5C6.2 6.8 5.7 9.4 6.7 11.6C7.2 12.6 7.9 13 8.5 13.3L8.3 15L7.5 18.4L8.5 19.8L10.3 20L9.6 18.6L10.9 15.9L15.2 15.5L15.3 19.8L16.5 19.8L16.7 15.6L17.5 15.1L19.3 19.2L20.5 19.4L18.9 14L18.7 11L20.9 9.6L20.4 8.6L19.3 8.2L18.7 6.9L17.6 7.6L16.8 10.6L14 11.4L9.4 11.6C8.2 11.4 7.4 10.4 7.2 9C7 7.6 7.6 6.5 8.5 5.9Z" fill="#2a2a2a"/></svg>
<span class="t" style="left:865.0px;top:481.0px;height:16px;line-height:16px;font-size:12px;color:#000;transform:scaleX(0.932);">Both</span>
<div class="r" style="left:600px;top:532.0px;width:13px;height:13px;background:#fff;border:1px solid #333;"></div>
<span class="t" style="left:617.5px;top:530.5px;height:16px;line-height:16px;font-size:12px;color:#000;transform:scaleX(0.958);">Move with te<u>x</u>t</span>
<div class="r" style="left:600px;top:554.5px;width:13px;height:13px;background:#fff;border:1px solid #333;"></div>
<span class="t" style="left:617.5px;top:553.0px;height:16px;line-height:16px;font-size:12px;color:#000;transform:scaleX(0.917);">Fix on pa<u>g</u>e</span>
<div class="r" style="left:770px;top:551px;width:60px;height:20px;background:#fff;border:1px solid #a3bde3;"></div><div class="r" style="left:816px;top:551px;width:14px;height:20px;background:#d9d9d9;border:1px solid #c0c0c0;"></div><div class="r" style="left:816px;top:560.5px;width:14px;height:1px;background:#c8c8c8;"></div><svg class="r" style="left:819px;top:551px" width="8" height="20" viewBox="0 0 8 20"><path d="M0.8 7.2L4 3.7L7.2 7.2Z M0.8 12.8L4 16.3L7.2 12.8Z" fill="#9a9a9a"/></svg><span class="t" style="left:774.5px;top:553.5px;height:16px;line-height:16px;font-size:12px;color:#8c8c8c;transform:scaleX(0.749);">1</span>
<svg class="r" style="left:859px;top:531px" width="15" height="38" viewBox="0 0 15 38"><circle cx="7.5" cy="7.5" r="6" fill="#fff" stroke="#333"/><circle cx="7.5" cy="7.5" r="3" fill="#222"/><circle cx="7.5" cy="30" r="6" fill="#fff" stroke="#333"/></svg>
<span class="t" style="left:878.5px;top:530.5px;height:16px;line-height:16px;font-size:12px;color:#000;transform:scaleX(0.923);">Move anc<u>h</u>or to the nearest paragraph</span>
<span class="t" style="left:878.5px;top:553.0px;height:16px;line-height:16px;font-size:12px;color:#000;transform:scaleX(0.916);">Keep anchor at current <u>p</u>aragraph</span>
<div class="r" style="left:575px;top:634px;width:165px;height:26px;background:#e1e1e1;border:1px solid #adadad;"></div>
<span class="t" style="left:636.0px;top:639.0px;height:16px;line-height:16px;font-size:12px;color:#000;transform:scaleX(0.916);"><u>D</u>efault...</span>
<div class="r" style="left:1074px;top:634px;width:84px;height:26px;background:#e1e1e1;border:2px solid #0078d7;"></div>
<span class="t" style="left:1108.5px;top:639.0px;height:16px;line-height:16px;font-size:12px;color:#000;transform:scaleX(0.865);">OK</span>
<div class="r" style="left:1167px;top:634px;width:84px;height:26px;background:#e1e1e1;border:1px solid #adadad;"></div>
<span class="t" style="left:1192.5px;top:639.0px;height:16px;line-height:16px;font-size:12px;color:#000;transform:scaleX(0.883);">Cancel</span>
<svg class="r" style="left:480px;top:96px" width="560" height="110" viewBox="480 96 560 110" fill="#000" stroke="#000"><text transform="translate(490.8 174.8) scale(0.85 0.975)" x="0" y="0" font-size="90" stroke-width="3">@</text><text transform="translate(0 171.9) scale(1 0.963)" x="569.7 600.6 655.3 688.1 719.2 787.1 807.9 854.1 879.4 948.1 970.1" y="0" font-size="90" stroke-width="1.7">turtwig.wik</text></svg>
<span class="t" style="left:1006.0px;top:644.0px;height:23px;line-height:23px;font-size:19px;color:rgba(125,125,125,.42);transform:scaleX(0.974);">Activate Windows</span>
<span class="t" style="left:1006.0px;top:668.9px;height:17.3px;line-height:17.3px;font-size:13.3px;color:rgba(125,125,125,.42);transform:scaleX(1.029);">Go to Settings to activate Windows.</span>
<svg class="r" style="left:1118px;top:668px" width="10" height="9" viewBox="0 0 10 9"><path d="M1 .5h8L5 4Z M1 4.500h8L5 8Z" fill="#111"/></svg>
</body></html>
